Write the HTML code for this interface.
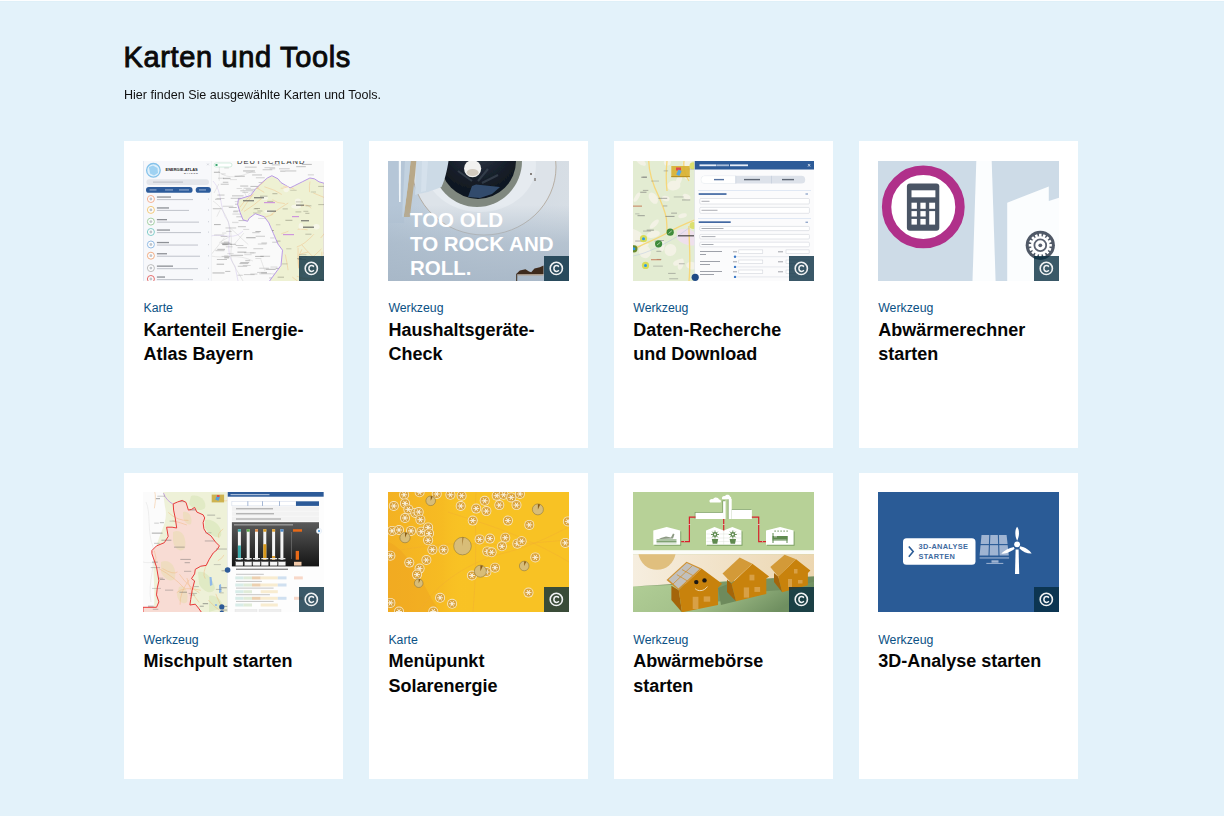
<!DOCTYPE html>
<html><head><meta charset="utf-8">
<style>
html,body{margin:0;padding:0;}
body{width:1224px;height:816px;overflow:hidden;background:#e3f2fa;font-family:"Liberation Sans",sans-serif;position:relative;}
.topline{position:absolute;left:0;top:0;width:1224px;height:1px;background:#fdfeff;border-bottom:1px solid #dff0f8;}
h1{position:absolute;left:123.5px;top:37px;margin:0;font-size:29px;letter-spacing:0.65px;font-weight:normal;-webkit-text-stroke:0.9px #0a0a0a;color:#0a0a0a;line-height:40px;white-space:nowrap;}
.sub{position:absolute;left:124px;top:86.5px;margin:0;font-size:13px;transform:scaleX(0.965);transform-origin:0 0;color:#111;line-height:16px;white-space:nowrap;}
.card{position:absolute;width:219.3px;height:306.6px;background:#fff;}
.img{position:absolute;left:19px;top:20px;width:181px;height:120px;overflow:hidden;background:#ccc;}
.img svg{position:absolute;left:0;top:0;}
.r2 .img{top:19.4px;}
.cc{position:absolute;right:0;bottom:0;width:25px;height:25px;background:rgba(4,42,62,0.78);}

.cc svg{position:absolute;left:0;top:0;}
.lab{position:absolute;left:19.5px;top:159px;font-size:12.3px;color:#0b5184;line-height:16px;white-space:nowrap;}
.tit{position:absolute;left:19.5px;top:176.8px;width:190px;font-size:18px;font-weight:bold;color:#050505;line-height:24.3px;}
</style></head>
<body>
<div class="topline"></div>
<h1>Karten und Tools</h1>
<p class="sub">Hier finden Sie ausgewählte Karten und Tools.</p>

<div class="card" style="left:124px;top:141px">
 <div class="img" id="i1" style="background:#fbfbfb"><svg width="181" height="120" viewBox="0 0 181 120">
<defs><clipPath id="c1bav"><path d="M95.4 38.3 L107.6 34.5 L112.2 28.4 L118.2 22.3 L124.3 17 L128.9 14.7 L135 17.8 L138 21.6 L147.1 26.9 L151.7 24.6 L159.3 20.8 L166.9 17 L171.4 17.8 L176 20.8 L181.3 22.3 L181.3 121 L125.8 121 L138 104.4 L139.5 89.2 L135 83.1 L130.4 72.5 L125.8 61.8 L121.3 55.8 L112.2 52.7 L106.1 57.3 L104.6 60.3 L100 58.8 L97 51.2 L94.7 43.6 Z"/></clipPath></defs>
<rect width="181" height="120" fill="#fafafa"/>
<g fill="none" stroke="#c9b8e8" stroke-width="0.5" opacity="0.8">
<path d="M70 20 C80 30 76 50 85 60 C90 75 80 90 92 105 L95 120"/>
<path d="M68 75 C80 72 90 80 100 70"/>
</g>
<g fill="none" stroke="#cfcfcf" stroke-width="0.45">
<path d="M70 40 C85 50 90 70 88 90 C86 100 95 110 100 120"/>
<path d="M75 10 C85 20 100 15 110 10"/>
<path d="M68 95 C80 98 95 92 110 100"/>
</g>
<rect x="94.9" y="65.1" width="8.0" height="1.1" fill="#8a8a8a" opacity="0.43"/><rect x="137.2" y="9.6" width="5.1" height="1.1" fill="#8a8a8a" opacity="0.50"/><rect x="97.3" y="29.2" width="13.0" height="1.1" fill="#8a8a8a" opacity="0.39"/><rect x="160.2" y="57.3" width="10.1" height="1.1" fill="#8a8a8a" opacity="0.30"/><rect x="138.2" y="102.7" width="9.2" height="1.1" fill="#8a8a8a" opacity="0.47"/><rect x="142.2" y="9.4" width="11.1" height="1.1" fill="#8a8a8a" opacity="0.43"/><rect x="101.8" y="5.6" width="11.9" height="1.1" fill="#8a8a8a" opacity="0.39"/><rect x="147.4" y="103.9" width="10.7" height="1.1" fill="#8a8a8a" opacity="0.53"/><rect x="112.1" y="94.9" width="8.6" height="1.1" fill="#8a8a8a" opacity="0.53"/><rect x="164.8" y="13.3" width="6.1" height="1.1" fill="#8a8a8a" opacity="0.32"/><rect x="174.2" y="52.6" width="10.0" height="1.1" fill="#8a8a8a" opacity="0.34"/><rect x="124.3" y="46.8" width="7.8" height="1.1" fill="#8a8a8a" opacity="0.43"/><rect x="132.7" y="106.9" width="10.5" height="1.1" fill="#8a8a8a" opacity="0.53"/><rect x="162.3" y="117.0" width="10.4" height="1.1" fill="#8a8a8a" opacity="0.30"/><rect x="162.8" y="113.9" width="12.2" height="1.1" fill="#8a8a8a" opacity="0.42"/><rect x="146.8" y="26.5" width="11.7" height="1.1" fill="#8a8a8a" opacity="0.42"/><rect x="100.1" y="9.4" width="11.8" height="1.1" fill="#8a8a8a" opacity="0.55"/><rect x="78.6" y="94.9" width="8.3" height="1.1" fill="#8a8a8a" opacity="0.30"/><rect x="101.0" y="91.2" width="12.0" height="1.1" fill="#8a8a8a" opacity="0.26"/><rect x="136.0" y="7.2" width="10.7" height="1.1" fill="#8a8a8a" opacity="0.35"/><rect x="165.0" y="115.8" width="9.0" height="1.1" fill="#8a8a8a" opacity="0.55"/><rect x="102.8" y="10.9" width="9.8" height="1.1" fill="#8a8a8a" opacity="0.26"/><rect x="90.5" y="49.3" width="9.9" height="1.1" fill="#8a8a8a" opacity="0.30"/><rect x="73.6" y="102.7" width="7.5" height="1.1" fill="#8a8a8a" opacity="0.54"/><rect x="166.7" y="45.8" width="8.7" height="1.1" fill="#8a8a8a" opacity="0.41"/><rect x="139.2" y="71.1" width="9.5" height="1.1" fill="#8a8a8a" opacity="0.44"/><rect x="171.5" y="60.8" width="8.4" height="1.1" fill="#8a8a8a" opacity="0.47"/><rect x="94.9" y="36.9" width="12.8" height="1.1" fill="#8a8a8a" opacity="0.41"/><rect x="128.8" y="3.3" width="8.3" height="1.1" fill="#8a8a8a" opacity="0.42"/><rect x="71.2" y="73.4" width="10.1" height="1.1" fill="#8a8a8a" opacity="0.27"/><rect x="137.4" y="56.1" width="10.4" height="1.1" fill="#8a8a8a" opacity="0.36"/><rect x="146.1" y="87.6" width="5.2" height="1.1" fill="#8a8a8a" opacity="0.27"/><rect x="142.7" y="113.7" width="7.0" height="1.1" fill="#8a8a8a" opacity="0.39"/><rect x="133.6" y="39.1" width="7.9" height="1.1" fill="#8a8a8a" opacity="0.34"/><rect x="109.2" y="71.1" width="7.4" height="1.1" fill="#8a8a8a" opacity="0.36"/><rect x="153.2" y="5.1" width="9.6" height="1.1" fill="#8a8a8a" opacity="0.47"/><rect x="102.8" y="27.8" width="11.4" height="1.1" fill="#8a8a8a" opacity="0.32"/><rect x="89.4" y="52.5" width="10.6" height="1.1" fill="#8a8a8a" opacity="0.28"/><rect x="104.1" y="40.7" width="11.7" height="1.1" fill="#8a8a8a" opacity="0.38"/><rect x="162.3" y="21.6" width="7.7" height="1.1" fill="#8a8a8a" opacity="0.45"/><rect x="165.5" y="54.3" width="6.8" height="1.1" fill="#8a8a8a" opacity="0.29"/><rect x="126.7" y="24.1" width="11.5" height="1.1" fill="#8a8a8a" opacity="0.50"/><rect x="89.0" y="34.3" width="11.5" height="1.1" fill="#8a8a8a" opacity="0.44"/><rect x="156.9" y="42.1" width="6.0" height="1.1" fill="#8a8a8a" opacity="0.34"/><rect x="155.5" y="33.5" width="7.8" height="1.1" fill="#8a8a8a" opacity="0.38"/><rect x="114.8" y="49.5" width="12.4" height="1.1" fill="#8a8a8a" opacity="0.30"/><rect x="69.5" y="111.4" width="12.0" height="1.1" fill="#8a8a8a" opacity="0.55"/><rect x="116.3" y="112.2" width="12.4" height="1.1" fill="#8a8a8a" opacity="0.32"/><rect x="150.3" y="99.1" width="10.3" height="1.1" fill="#8a8a8a" opacity="0.41"/><rect x="100.5" y="41.6" width="6.8" height="1.1" fill="#8a8a8a" opacity="0.27"/><rect x="133.2" y="35.3" width="11.5" height="1.1" fill="#8a8a8a" opacity="0.26"/><rect x="167.5" y="82.5" width="12.4" height="1.1" fill="#8a8a8a" opacity="0.52"/><rect x="167.1" y="68.9" width="5.1" height="1.1" fill="#8a8a8a" opacity="0.47"/><rect x="87.7" y="36.8" width="10.3" height="1.1" fill="#8a8a8a" opacity="0.41"/><rect x="114.1" y="110.9" width="9.9" height="1.1" fill="#8a8a8a" opacity="0.35"/><rect x="96.5" y="102.0" width="8.8" height="1.1" fill="#8a8a8a" opacity="0.48"/><rect x="107.4" y="24.9" width="9.3" height="1.1" fill="#8a8a8a" opacity="0.50"/><rect x="87.7" y="93.8" width="12.4" height="1.1" fill="#8a8a8a" opacity="0.49"/><rect x="158.8" y="2.9" width="10.0" height="1.1" fill="#8a8a8a" opacity="0.51"/><rect x="74.4" y="33.5" width="7.1" height="1.1" fill="#8a8a8a" opacity="0.41"/><rect x="115.1" y="56.9" width="11.2" height="1.1" fill="#8a8a8a" opacity="0.25"/><rect x="75.0" y="16.7" width="6.0" height="1.1" fill="#8a8a8a" opacity="0.27"/><rect x="175.2" y="101.1" width="5.7" height="1.1" fill="#8a8a8a" opacity="0.40"/><rect x="103.4" y="38.5" width="7.8" height="1.1" fill="#8a8a8a" opacity="0.44"/><rect x="132.9" y="43.9" width="6.5" height="1.1" fill="#8a8a8a" opacity="0.35"/><rect x="82.5" y="66.4" width="10.7" height="1.1" fill="#8a8a8a" opacity="0.36"/><rect x="77.7" y="22.7" width="8.0" height="1.1" fill="#8a8a8a" opacity="0.43"/><rect x="154.3" y="46.1" width="11.4" height="1.1" fill="#8a8a8a" opacity="0.44"/><rect x="116.0" y="45.2" width="9.0" height="1.1" fill="#8a8a8a" opacity="0.46"/><rect x="114.8" y="82.5" width="8.7" height="1.1" fill="#8a8a8a" opacity="0.32"/>
<g><rect x="93.6" y="27.0" width="5.3" height="0.9" fill="#707070" opacity="0.24"/><rect x="74.3" y="87.8" width="7.7" height="1.3" fill="#707070" opacity="0.36"/><rect x="126.2" y="60.3" width="7.0" height="1.3" fill="#707070" opacity="0.38"/><rect x="117.3" y="94.7" width="9.8" height="1.3" fill="#707070" opacity="0.26"/><rect x="97.2" y="24.6" width="8.0" height="0.9" fill="#707070" opacity="0.48"/><rect x="101.3" y="93.1" width="7.3" height="1.1" fill="#707070" opacity="0.21"/><rect x="103.0" y="52.9" width="6.5" height="1.3" fill="#707070" opacity="0.22"/><rect x="100.6" y="26.8" width="7.2" height="0.9" fill="#707070" opacity="0.31"/><rect x="82.2" y="109.9" width="5.1" height="1.1" fill="#707070" opacity="0.38"/><rect x="129.0" y="112.5" width="8.6" height="0.9" fill="#707070" opacity="0.23"/><rect x="79.4" y="82.6" width="6.9" height="1.1" fill="#707070" opacity="0.39"/><rect x="77.7" y="75.0" width="6.7" height="0.9" fill="#707070" opacity="0.36"/><rect x="81.2" y="94.5" width="4.4" height="0.9" fill="#707070" opacity="0.33"/><rect x="102.3" y="98.9" width="4.9" height="1.3" fill="#707070" opacity="0.34"/><rect x="72.4" y="88.9" width="9.0" height="1.3" fill="#707070" opacity="0.25"/><rect x="126.4" y="18.3" width="4.8" height="1.1" fill="#707070" opacity="0.25"/><rect x="79.8" y="20.7" width="5.5" height="1.3" fill="#707070" opacity="0.30"/><rect x="99.4" y="30.9" width="5.8" height="1.1" fill="#707070" opacity="0.26"/><rect x="73.4" y="37.1" width="8.1" height="0.9" fill="#707070" opacity="0.30"/><rect x="92.0" y="42.7" width="9.7" height="1.1" fill="#707070" opacity="0.32"/><rect x="91.6" y="14.7" width="10.2" height="1.1" fill="#707070" opacity="0.42"/><rect x="93.3" y="55.1" width="6.2" height="1.3" fill="#707070" opacity="0.27"/><rect x="112.9" y="16.2" width="8.8" height="1.1" fill="#707070" opacity="0.27"/><rect x="118.4" y="81.5" width="5.7" height="1.1" fill="#707070" opacity="0.33"/><rect x="127.5" y="105.5" width="6.9" height="1.1" fill="#707070" opacity="0.22"/><rect x="86.9" y="82.8" width="6.2" height="1.1" fill="#707070" opacity="0.36"/><rect x="125.7" y="33.5" width="10.2" height="1.1" fill="#707070" opacity="0.49"/><rect x="119.4" y="22.3" width="6.7" height="1.3" fill="#707070" opacity="0.38"/><rect x="129.2" y="80.7" width="7.1" height="1.1" fill="#707070" opacity="0.30"/><rect x="81.1" y="4.5" width="6.5" height="1.1" fill="#707070" opacity="0.49"/><rect x="80.8" y="80.5" width="5.2" height="1.3" fill="#707070" opacity="0.28"/><rect x="94.4" y="90.6" width="8.9" height="1.1" fill="#707070" opacity="0.46"/><rect x="90.1" y="50.0" width="4.8" height="1.3" fill="#707070" opacity="0.26"/><rect x="100.8" y="113.2" width="10.8" height="0.9" fill="#707070" opacity="0.35"/><rect x="118.2" y="111.3" width="5.8" height="1.3" fill="#707070" opacity="0.33"/><rect x="103.2" y="76.0" width="9.4" height="1.3" fill="#707070" opacity="0.43"/><rect x="81.2" y="6.4" width="4.7" height="1.1" fill="#707070" opacity="0.22"/><rect x="70.9" y="10.7" width="6.1" height="1.3" fill="#707070" opacity="0.39"/><rect x="112.4" y="70.1" width="5.4" height="0.9" fill="#707070" opacity="0.50"/><rect x="117.4" y="49.8" width="5.2" height="1.1" fill="#707070" opacity="0.30"/><rect x="122.6" y="107.7" width="10.1" height="1.3" fill="#707070" opacity="0.41"/><rect x="94.5" y="113.7" width="5.3" height="1.1" fill="#707070" opacity="0.26"/><rect x="97.3" y="101.1" width="8.9" height="0.9" fill="#707070" opacity="0.45"/><rect x="126.2" y="59.1" width="10.3" height="1.1" fill="#707070" opacity="0.40"/><rect x="128.8" y="65.1" width="11.0" height="1.3" fill="#707070" opacity="0.20"/><rect x="89.1" y="60.8" width="6.4" height="1.3" fill="#707070" opacity="0.20"/><rect x="110.5" y="35.7" width="4.1" height="1.1" fill="#707070" opacity="0.32"/><rect x="79.1" y="71.6" width="4.3" height="0.9" fill="#707070" opacity="0.21"/><rect x="100.2" y="67.9" width="6.0" height="1.1" fill="#707070" opacity="0.22"/><rect x="116.3" y="30.4" width="5.3" height="1.1" fill="#707070" opacity="0.25"/><rect x="85.8" y="46.0" width="7.9" height="0.9" fill="#707070" opacity="0.43"/><rect x="79.6" y="44.7" width="10.7" height="1.3" fill="#707070" opacity="0.22"/><rect x="110.4" y="87.3" width="9.8" height="0.9" fill="#707070" opacity="0.36"/><rect x="71.0" y="63.0" width="6.7" height="1.1" fill="#707070" opacity="0.46"/><rect x="112.7" y="74.7" width="9.3" height="1.3" fill="#707070" opacity="0.25"/><rect x="116.2" y="106.7" width="9.7" height="1.1" fill="#707070" opacity="0.26"/><rect x="80.0" y="16.8" width="7.5" height="1.3" fill="#707070" opacity="0.42"/><rect x="69.8" y="47.3" width="8.8" height="0.9" fill="#707070" opacity="0.43"/><rect x="129.4" y="69.2" width="9.1" height="1.3" fill="#707070" opacity="0.46"/><rect x="73.9" y="98.0" width="10.1" height="0.9" fill="#707070" opacity="0.43"/><rect x="91.8" y="40.0" width="4.3" height="1.1" fill="#707070" opacity="0.21"/><rect x="126.9" y="19.3" width="4.1" height="1.1" fill="#707070" opacity="0.44"/><rect x="87.0" y="18.2" width="7.0" height="0.9" fill="#707070" opacity="0.21"/><rect x="79.0" y="82.6" width="9.9" height="1.3" fill="#707070" opacity="0.30"/><rect x="119.6" y="8.0" width="9.7" height="1.3" fill="#707070" opacity="0.27"/><rect x="78.2" y="81.6" width="9.3" height="1.1" fill="#707070" opacity="0.42"/><rect x="94.6" y="86.3" width="9.4" height="0.9" fill="#707070" opacity="0.36"/><rect x="129.5" y="28.4" width="8.5" height="0.9" fill="#707070" opacity="0.45"/><rect x="74.7" y="4.5" width="10.6" height="0.9" fill="#707070" opacity="0.24"/><rect x="127.2" y="76.4" width="4.4" height="1.1" fill="#707070" opacity="0.25"/><rect x="115.6" y="21.1" width="10.5" height="0.9" fill="#707070" opacity="0.35"/><rect x="126.2" y="116.3" width="4.5" height="1.3" fill="#707070" opacity="0.27"/><rect x="95.5" y="59.0" width="8.3" height="1.1" fill="#707070" opacity="0.35"/><rect x="83.2" y="69.9" width="5.5" height="0.9" fill="#707070" opacity="0.33"/><rect x="81.3" y="96.1" width="4.9" height="1.3" fill="#707070" opacity="0.47"/><rect x="79.5" y="82.9" width="5.2" height="1.3" fill="#707070" opacity="0.40"/><rect x="99.8" y="104.1" width="7.8" height="0.9" fill="#707070" opacity="0.27"/><rect x="82.8" y="85.1" width="6.8" height="1.3" fill="#707070" opacity="0.22"/><rect x="84.3" y="92.2" width="6.3" height="0.9" fill="#707070" opacity="0.23"/><rect x="107.3" y="112.5" width="7.1" height="1.1" fill="#707070" opacity="0.26"/><rect x="72.0" y="37.7" width="5.9" height="1.3" fill="#707070" opacity="0.28"/><rect x="104.2" y="38.0" width="9.1" height="0.9" fill="#707070" opacity="0.25"/><rect x="92.7" y="84.1" width="7.7" height="0.9" fill="#707070" opacity="0.34"/><rect x="126.6" y="7.1" width="5.6" height="1.3" fill="#707070" opacity="0.22"/><rect x="121.5" y="6.1" width="10.6" height="1.1" fill="#707070" opacity="0.27"/><rect x="78.4" y="12.5" width="4.2" height="0.9" fill="#707070" opacity="0.27"/><rect x="106.9" y="91.5" width="4.5" height="0.9" fill="#707070" opacity="0.33"/><rect x="109.1" y="13.3" width="9.9" height="1.3" fill="#707070" opacity="0.31"/><rect x="94.8" y="104.7" width="9.4" height="1.3" fill="#707070" opacity="0.28"/><rect x="112.4" y="97.0" width="5.9" height="0.9" fill="#707070" opacity="0.22"/></g><g fill="none" stroke="#c8c8c8" stroke-width="0.4"><path d="M71.0 32.0 L75.9 22.9"/><path d="M87.7 75.0 L76.2 81.6"/><path d="M100.8 72.2 L91.3 83.3"/><path d="M76.4 2.1 L76.2 19.8"/><path d="M118.2 53.0 L130.0 63.2"/><path d="M100.1 28.2 L107.8 45.1"/><path d="M121.9 109.9 L117.8 98.3"/><path d="M105.1 33.6 L114.8 27.1"/><path d="M105.3 83.6 L87.2 66.9"/><path d="M76.9 49.2 L73.8 55.7"/><path d="M104.8 2.1 L89.6 -5.1"/><path d="M81.4 76.8 L65.7 96.7"/></g><path d="M95.4 38.3 L107.6 34.5 L112.2 28.4 L118.2 22.3 L124.3 17 L128.9 14.7 L135 17.8 L138 21.6 L147.1 26.9 L151.7 24.6 L159.3 20.8 L166.9 17 L171.4 17.8 L176 20.8 L181.3 22.3 L181.3 121 L125.8 121 L138 104.4 L139.5 89.2 L135 83.1 L130.4 72.5 L125.8 61.8 L121.3 55.8 L112.2 52.7 L106.1 57.3 L104.6 60.3 L100 58.8 L97 51.2 L94.7 43.6 Z" fill="#eef1d3" stroke="#b28ee6" stroke-width="0.9"/>
<g clip-path="url(#c1bav)"><ellipse cx="164.3" cy="114.4" rx="5.0" ry="1.5" fill="#f8f8ee" opacity="0.8"/><ellipse cx="124.4" cy="50.5" rx="3.2" ry="1.8" fill="#f8f8ee" opacity="0.8"/><ellipse cx="143.2" cy="27.8" rx="2.9" ry="3.4" fill="#f8f8ee" opacity="0.8"/><ellipse cx="157.9" cy="65.3" rx="2.3" ry="3.4" fill="#f8f8ee" opacity="0.8"/><ellipse cx="154.9" cy="40.2" rx="3.0" ry="2.8" fill="#f8f8ee" opacity="0.8"/><ellipse cx="153.2" cy="45.6" rx="4.9" ry="2.1" fill="#f8f8ee" opacity="0.8"/><ellipse cx="119.8" cy="102.8" rx="2.5" ry="2.9" fill="#f8f8ee" opacity="0.8"/><ellipse cx="115.6" cy="78.6" rx="2.8" ry="2.3" fill="#f8f8ee" opacity="0.8"/><ellipse cx="173.4" cy="65.8" rx="3.3" ry="2.7" fill="#f8f8ee" opacity="0.8"/><ellipse cx="121.9" cy="37.1" rx="3.2" ry="2.0" fill="#f8f8ee" opacity="0.8"/></g><g clip-path="url(#c1bav)" fill="none" stroke="#f2b878" stroke-width="0.45" opacity="0.9"><path d="M109.2 87.4 Q102.4 84.7 100.1 77.2"/><path d="M164.5 68.8 Q155.6 67.6 154.7 68.5"/><path d="M145.3 22.3 Q144.5 13.9 148.0 12.9"/><path d="M180.8 92.6 Q182.7 85.6 192.0 81.3"/><path d="M137.8 27.2 Q140.7 27.9 149.1 23.6"/><path d="M105.7 112.4 Q97.4 114.5 91.6 116.8"/><path d="M111.1 18.9 Q116.6 12.9 117.5 11.6"/><path d="M178.3 108.9 Q179.2 101.6 178.8 90.7"/><path d="M105.5 65.0 Q111.1 64.0 109.8 56.8"/><path d="M130.2 53.3 Q128.4 54.3 118.6 57.0"/><path d="M97.3 24.8 Q95.1 14.0 92.9 3.4"/><path d="M142.3 93.6 Q144.2 102.3 145.1 109.1"/><path d="M110.5 32.9 Q103.3 42.1 98.5 49.9"/><path d="M121.4 25.8 Q132.3 28.7 138.8 33.5"/><path d="M153.8 86.0 Q161.6 83.5 170.9 73.2"/><path d="M177.7 77.0 Q181.8 70.3 187.9 67.7"/><path d="M170.3 32.0 Q181.1 35.9 187.5 40.0"/><path d="M167.0 20.5 Q166.1 23.2 166.5 31.1"/><path d="M101.0 50.5 Q111.7 43.9 118.5 37.6"/><path d="M116.7 115.7 Q104.2 112.0 99.3 112.9"/><path d="M167.1 98.5 Q172.2 93.8 178.5 87.9"/><path d="M168.0 47.3 Q165.1 42.3 157.9 45.1"/><path d="M153.9 115.2 Q162.8 119.1 169.3 117.4"/><path d="M145.3 42.0 Q139.7 45.0 127.6 54.0"/><path d="M103.2 24.9 Q106.8 28.8 116.1 26.9"/><path d="M151.4 28.3 Q145.9 24.7 140.5 25.6"/><path d="M109.3 34.3 Q103.4 36.7 96.8 46.4"/><path d="M156.1 106.8 Q153.6 97.2 158.9 88.3"/><path d="M100.5 95.2 Q102.4 104.5 108.3 110.7"/><path d="M122.0 19.4 Q121.0 21.3 113.6 26.5"/><path d="M138.3 72.7 Q142.7 71.5 145.4 70.2"/><path d="M158.2 116.5 Q155.2 125.0 151.8 132.5"/><path d="M100.5 100.5 Q104.8 103.6 112.0 98.8"/><path d="M104.3 23.0 Q114.9 26.8 121.3 31.4"/><path d="M148.4 17.1 Q144.5 11.0 140.4 6.8"/><path d="M129.5 38.7 Q133.7 42.3 141.9 42.6"/><path d="M165.3 91.0 Q159.7 92.2 155.9 93.7"/><path d="M149.3 116.1 Q155.1 121.4 161.1 123.1"/><path d="M171.6 96.8 Q166.6 93.2 158.9 83.9"/><path d="M155.1 86.7 Q154.5 98.0 155.7 107.4"/></g>
<g clip-path="url(#c1bav)" fill="#5a5a5a" opacity="0.7">
<rect x="100" y="39" width="11" height="1.4"/><rect x="111" y="36" width="10" height="1.4"/><rect x="124" y="49.5" width="9" height="1.4"/>
<rect x="153" y="43.5" width="8" height="1.4"/><rect x="158" y="59" width="8" height="1.4"/><rect x="160" y="65.5" width="11" height="1.5"/>
<rect x="149" y="55" width="7" height="1.2" fill="#c070e0"/><rect x="121" y="41" width="11" height="1.2" fill="#c070e0"/><rect x="140" y="73" width="11" height="1.2" fill="#c070e0"/>
</g>
<g clip-path="url(#c1bav)"><rect x="164.8" y="107.2" width="4.9" height="1" fill="#6a6a5a" opacity="0.28"/><rect x="160.4" y="49.8" width="4.9" height="1" fill="#6a6a5a" opacity="0.35"/><rect x="124.2" y="39.9" width="6.1" height="1" fill="#6a6a5a" opacity="0.41"/><rect x="106.1" y="114.0" width="5.5" height="1" fill="#6a6a5a" opacity="0.46"/><rect x="156.7" y="95.0" width="7.6" height="1" fill="#6a6a5a" opacity="0.26"/><rect x="147.2" y="28.8" width="6.4" height="1" fill="#6a6a5a" opacity="0.28"/><rect x="122.7" y="69.0" width="8.2" height="1" fill="#6a6a5a" opacity="0.47"/><rect x="139.1" y="102.4" width="5.3" height="1" fill="#6a6a5a" opacity="0.31"/><rect x="114.4" y="49.5" width="5.0" height="1" fill="#6a6a5a" opacity="0.38"/><rect x="162.6" y="44.3" width="5.8" height="1" fill="#6a6a5a" opacity="0.38"/><rect x="117.7" y="64.2" width="4.7" height="1" fill="#6a6a5a" opacity="0.25"/><rect x="156.5" y="93.2" width="6.9" height="1" fill="#6a6a5a" opacity="0.27"/><rect x="132.9" y="63.3" width="4.5" height="1" fill="#6a6a5a" opacity="0.25"/><rect x="167.8" y="30.5" width="5.2" height="1" fill="#6a6a5a" opacity="0.30"/><rect x="111.4" y="47.0" width="5.6" height="1" fill="#6a6a5a" opacity="0.46"/><rect x="152.8" y="40.4" width="7.1" height="1" fill="#6a6a5a" opacity="0.33"/><rect x="175.3" y="43.1" width="6.0" height="1" fill="#6a6a5a" opacity="0.38"/><rect x="134.6" y="115.7" width="6.4" height="1" fill="#6a6a5a" opacity="0.40"/><rect x="117.0" y="34.7" width="7.5" height="1" fill="#6a6a5a" opacity="0.42"/><rect x="143.2" y="87.3" width="5.2" height="1" fill="#6a6a5a" opacity="0.30"/><rect x="162.3" y="72.7" width="6.1" height="1" fill="#6a6a5a" opacity="0.37"/><rect x="112.8" y="55.7" width="4.9" height="1" fill="#6a6a5a" opacity="0.38"/><rect x="162.3" y="51.8" width="4.1" height="1" fill="#6a6a5a" opacity="0.40"/><rect x="111.9" y="64.3" width="4.3" height="1" fill="#6a6a5a" opacity="0.33"/><rect x="152.5" y="50.4" width="5.8" height="1" fill="#6a6a5a" opacity="0.39"/><rect x="154.1" y="97.0" width="4.5" height="1" fill="#6a6a5a" opacity="0.39"/><rect x="102.6" y="110.1" width="6.1" height="1" fill="#6a6a5a" opacity="0.41"/><rect x="103.1" y="83.0" width="6.4" height="1" fill="#6a6a5a" opacity="0.36"/><rect x="142.4" y="58.8" width="7.0" height="1" fill="#6a6a5a" opacity="0.46"/><rect x="129.4" y="32.2" width="5.0" height="1" fill="#6a6a5a" opacity="0.44"/><rect x="110.5" y="47.4" width="4.5" height="1" fill="#6a6a5a" opacity="0.25"/><rect x="130.5" y="79.6" width="7.0" height="1" fill="#6a6a5a" opacity="0.40"/><rect x="176.2" y="118.4" width="5.4" height="1" fill="#6a6a5a" opacity="0.47"/><rect x="110.5" y="108.0" width="8.2" height="1" fill="#6a6a5a" opacity="0.32"/><rect x="154.7" y="98.0" width="8.3" height="1" fill="#6a6a5a" opacity="0.26"/><rect x="139.6" y="47.4" width="5.2" height="1" fill="#6a6a5a" opacity="0.38"/><rect x="110.0" y="51.4" width="7.7" height="1" fill="#6a6a5a" opacity="0.27"/><rect x="175.2" y="24.9" width="6.5" height="1" fill="#6a6a5a" opacity="0.37"/><rect x="105.2" y="107.3" width="5.2" height="1" fill="#6a6a5a" opacity="0.38"/><rect x="103.0" y="66.0" width="8.0" height="1" fill="#6a6a5a" opacity="0.48"/></g><text x="93.9" y="2.8" font-family="Liberation Sans" font-size="7.5" fill="#333" textLength="67.6" lengthAdjust="spacing">DEUTSCHLAND</text>
<rect x="0" y="0" width="68.3" height="120" fill="#f7f8fb"/>
<rect x="0" y="0" width="0.8" height="120" fill="#dfe6f2"/>
<rect x="68.3" y="0" width="0.5" height="120" fill="#e8eaef"/>
<circle cx="10.4" cy="9.3" r="6.8" fill="#dff0fb" stroke="#84c2ea" stroke-width="1.3"/>
<path d="M6 6 L10 4.5 L14.5 7 L15 12 L11 14.5 L7 12.5 Z" fill="#9fd2f2"/>
<text x="22.5" y="10.1" font-family="Liberation Sans" font-weight="bold" font-size="4.4" fill="#222" textLength="32.2" lengthAdjust="spacingAndGlyphs">ENERGIE-ATLAS</text>
<text x="41" y="13.1" font-family="Liberation Sans" font-weight="bold" font-size="2.4" fill="#555" textLength="13.7" lengthAdjust="spacing">BAYERN</text>
<path d="M64 2.5 L65.8 4.3 M65.8 2.5 L64 4.3" stroke="#b8bcc4" stroke-width="0.5"/>
<rect x="3.4" y="18.2" width="62.6" height="5.8" rx="2.9" fill="#e4e6eb"/>
<rect x="10" y="20.6" width="30" height="1" fill="#b8bcc4"/>
<rect x="3" y="26" width="46.6" height="5.8" rx="2.9" fill="#2c5b9b"/>
<rect x="52.7" y="26" width="15.2" height="5.8" rx="2.9" fill="#2c5b9b"/>
<g fill="#c8d4e8" opacity="0.8"><rect x="6.5" y="28.5" width="7" height="0.9"/><rect x="22" y="28.5" width="8" height="0.9"/><rect x="36" y="28.5" width="10" height="0.9"/><rect x="56" y="28.5" width="7" height="0.9"/></g>
<circle cx="7.9" cy="38" r="3.5" fill="#fff" stroke="#f2a27e" stroke-width="1" opacity="0.85"/><circle cx="7.9" cy="38" r="1.4" fill="#9aa0a8" opacity="0.6"/><rect x="13.9" y="35.4" width="14.1" height="1.3" fill="#6a6d74" opacity="0.75"/><rect x="13.9" y="38" width="36.1" height="1.1" fill="#b8bcc4" opacity="0.8"/><rect x="65" y="37.5" width="0.8" height="1.2" fill="#c8ccd4"/><circle cx="7.9" cy="48.9" r="3.5" fill="#fff" stroke="#f0c062" stroke-width="1" opacity="0.85"/><circle cx="7.9" cy="48.9" r="1.4" fill="#9aa0a8" opacity="0.6"/><rect x="13.9" y="46.3" width="12.1" height="1.3" fill="#6a6d74" opacity="0.75"/><rect x="13.9" y="48.9" width="32.1" height="1.1" fill="#b8bcc4" opacity="0.8"/><rect x="65" y="48.4" width="0.8" height="1.2" fill="#c8ccd4"/><circle cx="7.9" cy="60.6" r="3.5" fill="#fff" stroke="#94c894" stroke-width="1" opacity="0.85"/><circle cx="7.9" cy="60.6" r="1.4" fill="#9aa0a8" opacity="0.6"/><rect x="13.9" y="58.0" width="10.1" height="1.3" fill="#6a6d74" opacity="0.75"/><rect x="13.9" y="60.6" width="42.1" height="1.1" fill="#b8bcc4" opacity="0.8"/><rect x="65" y="60.1" width="0.8" height="1.2" fill="#c8ccd4"/><circle cx="7.9" cy="71" r="3.5" fill="#fff" stroke="#6cc4c0" stroke-width="1" opacity="0.85"/><circle cx="7.9" cy="71" r="1.4" fill="#9aa0a8" opacity="0.6"/><rect x="13.9" y="68.4" width="13.1" height="1.3" fill="#6a6d74" opacity="0.75"/><rect x="13.9" y="71" width="44.1" height="1.1" fill="#b8bcc4" opacity="0.8"/><rect x="65" y="70.5" width="0.8" height="1.2" fill="#c8ccd4"/><circle cx="7.9" cy="83.5" r="3.5" fill="#fff" stroke="#7fb0e0" stroke-width="1" opacity="0.85"/><circle cx="7.9" cy="83.5" r="1.4" fill="#9aa0a8" opacity="0.6"/><rect x="13.9" y="80.9" width="12.1" height="1.3" fill="#6a6d74" opacity="0.75"/><rect x="13.9" y="83.5" width="41.1" height="1.1" fill="#b8bcc4" opacity="0.8"/><rect x="65" y="83.0" width="0.8" height="1.2" fill="#c8ccd4"/><circle cx="7.9" cy="94.7" r="3.5" fill="#fff" stroke="#f0a070" stroke-width="1" opacity="0.85"/><circle cx="7.9" cy="94.7" r="1.4" fill="#9aa0a8" opacity="0.6"/><rect x="13.9" y="92.10000000000001" width="10.1" height="1.3" fill="#6a6d74" opacity="0.75"/><rect x="13.9" y="94.7" width="43.1" height="1.1" fill="#b8bcc4" opacity="0.8"/><rect x="65" y="94.2" width="0.8" height="1.2" fill="#c8ccd4"/><circle cx="7.9" cy="107.1" r="3.5" fill="#fff" stroke="#b0b0b0" stroke-width="1" opacity="0.85"/><circle cx="7.9" cy="107.1" r="1.4" fill="#9aa0a8" opacity="0.6"/><rect x="13.9" y="104.5" width="16.1" height="1.3" fill="#6a6d74" opacity="0.75"/><rect x="13.9" y="107.1" width="41.1" height="1.1" fill="#b8bcc4" opacity="0.8"/><rect x="65" y="106.6" width="0.8" height="1.2" fill="#c8ccd4"/><circle cx="7.9" cy="118" r="3.5" fill="#fff" stroke="#e05050" stroke-width="1" opacity="0.85"/><circle cx="7.9" cy="118" r="1.4" fill="#9aa0a8" opacity="0.6"/><rect x="13.9" y="115.4" width="8.1" height="1.3" fill="#6a6d74" opacity="0.75"/><rect x="13.9" y="118" width="36.1" height="1.1" fill="#b8bcc4" opacity="0.8"/><rect x="65" y="117.5" width="0.8" height="1.2" fill="#c8ccd4"/>
<rect x="71" y="2" width="18" height="4" rx="2" fill="#fff" stroke="#a8dcc0" stroke-width="0.5"/>
<rect x="72.5" y="3" width="2" height="2" fill="#3aa870"/>
</svg><div class="cc"><svg width="25" height="25" viewBox="0 0 25 25"><circle cx="12.3" cy="12.4" r="6.1" fill="none" stroke="#f0f2f3" stroke-width="1.6"/><path d="M14.7 10.6 C14.2 9.8 13.4 9.5 12.6 9.5 C10.9 9.5 9.9 10.8 9.9 12.5 C9.9 14.2 10.9 15.4 12.6 15.4 C13.5 15.4 14.3 15 14.8 14.2" fill="none" stroke="#f0f2f3" stroke-width="1.5"/><path d="M14.6 9.6 L14.6 11.2" stroke="#f0f2f3" stroke-width="0.9"/></svg></div></div>
 <div class="lab">Karte</div>
 <div class="tit">Kartenteil Energie-<br>Atlas Bayern</div>
</div>
<div class="card" style="left:368.9px;top:141px">
 <div class="img" id="i2" style="background:#c9d3dd"><svg width="181" height="120" viewBox="0 0 181 120">
<defs>
<filter id="b2" x="-10%" y="-10%" width="120%" height="120%"><feGaussianBlur stdDeviation="0.55"/></filter>
<linearGradient id="g2bg" x1="0" y1="0" x2="1" y2="0"><stop offset="0" stop-color="#b8c9d9"/><stop offset="0.5" stop-color="#cdd7e1"/><stop offset="1" stop-color="#d7dee5"/></linearGradient>
<radialGradient id="g2drum" cx="0.5" cy="0.3" r="0.6"><stop offset="0" stop-color="#3a4350"/><stop offset="0.6" stop-color="#1b2330"/><stop offset="1" stop-color="#101820"/></radialGradient>
<linearGradient id="g2bot" x1="0" y1="0" x2="0" y2="1"><stop offset="0" stop-color="#a8b8c8" stop-opacity="0"/><stop offset="0.5" stop-color="#a8b8c8" stop-opacity="0.7"/><stop offset="1" stop-color="#a6b6c6" stop-opacity="0.9"/></linearGradient>
</defs>
<rect width="181" height="120" fill="url(#g2bg)"/>
<g filter="url(#b2)">
<ellipse cx="96" cy="6" rx="72" ry="68" fill="#dde3e9" stroke="#a89a88" stroke-width="0.7"/>
<ellipse cx="92" cy="4" rx="56" ry="47" fill="#e6ebf0"/>
<ellipse cx="89" cy="0" rx="45" ry="46" fill="#80887f"/>
<ellipse cx="90" cy="0" rx="38" ry="38" fill="url(#g2drum)"/>
<path d="M84 25 L88 23.5 L112 26 L104 33 L92 37 L80 36 Z" fill="#36557a" opacity="0.85"/><path d="M70 10 L84 20 M100 8 L90 20 M110 14 L94 22" stroke="#4a5664" stroke-width="2" opacity="0.5"/>
<circle cx="84.6" cy="7.6" r="8.6" fill="#f2f2f0"/>
<ellipse cx="84.6" cy="11.5" rx="6" ry="3.5" fill="#b8ab98" opacity="0.55"/>
<path d="M0 0 L17 0 L16 62 L0 62 Z" fill="#b5c6d7"/>
<path d="M10.8 0 L13 0 L12.6 41 L11 41 Z" fill="#f2f7fa"/>
<path d="M28 0 L60.5 0 C59 10 56.5 20 53.5 26 C48 28 44 29.5 40 31 C35 32 30 33 27 34 Z" fill="#ccdae6"/>
<path d="M34 0 L40 0 L38 30 L33 31 Z" fill="#d8e4ee" opacity="0.7"/>
<path d="M22.6 0 L28.3 0 C27 18 24 38 21.8 56 L15.7 56 C18 38 21 18 22.6 0 Z" fill="#b8a888"/>
<path d="M17 0 L22.6 0 C21 18 18 38 15.7 56 L14 56 Z" fill="#c2d2e0"/>
<circle cx="143" cy="13" r="0.9" fill="#5a5048"/>
<path d="M146.5 17 L147.5 17 L147.5 20 L146.5 20 Z" fill="#5a5048"/>

</g>
<rect y="44" width="181" height="76" fill="url(#g2bot)"/>
<g filter="url(#b2)"><path d="M128.5 112.8 L131.8 109.5 L137.5 108.3 L141 110.5 L143.2 111.2 L146.5 107.5 L151.8 106.3 L155.5 104.6 L155.5 113 L129.5 113.3 Z" fill="#3e2a1c"/>
<path d="M129.5 113.3 L155.5 113 L155.5 114.5 L130 114.5 Z" fill="#b08050" opacity="0.5"/>
<path d="M128.2 112.8 L129.3 112.8 L129.2 120 L128.2 120 Z" fill="#3e2e22"/></g>
<g font-family="Liberation Sans" font-weight="bold" font-size="20.5" fill="#fff">
<text x="22" y="65.8">TOO OLD</text>
<text x="22" y="89.6">TO ROCK AND</text>
<text x="22" y="113.5">ROLL.</text>
</g>
</svg><div class="cc"><svg width="25" height="25" viewBox="0 0 25 25"><circle cx="12.3" cy="12.4" r="6.1" fill="none" stroke="#f0f2f3" stroke-width="1.6"/><path d="M14.7 10.6 C14.2 9.8 13.4 9.5 12.6 9.5 C10.9 9.5 9.9 10.8 9.9 12.5 C9.9 14.2 10.9 15.4 12.6 15.4 C13.5 15.4 14.3 15 14.8 14.2" fill="none" stroke="#f0f2f3" stroke-width="1.5"/><path d="M14.6 9.6 L14.6 11.2" stroke="#f0f2f3" stroke-width="0.9"/></svg></div></div>
 <div class="lab">Werkzeug</div>
 <div class="tit">Haushaltsgeräte-<br>Check</div>
</div>
<div class="card" style="left:613.8px;top:141px">
 <div class="img" id="i3" style="background:#f4f2ea"><svg width="181" height="120" viewBox="0 0 181 120">
<rect width="181" height="120" fill="#e3ecd2"/>
<g fill="#f5f3e8" opacity="0.9"><ellipse cx="37.4" cy="89.0" rx="6.1" ry="5.8" transform="rotate(133 37.4 89.0)"/><ellipse cx="55.3" cy="3.5" rx="4.6" ry="5.8" transform="rotate(117 55.3 3.5)"/><ellipse cx="54.1" cy="13.6" rx="4.6" ry="3.0" transform="rotate(98 54.1 13.6)"/><ellipse cx="34.4" cy="1.6" rx="3.5" ry="3.1" transform="rotate(165 34.4 1.6)"/><ellipse cx="45.9" cy="19.2" rx="6.1" ry="2.6" transform="rotate(111 45.9 19.2)"/><ellipse cx="7.6" cy="0.2" rx="6.4" ry="2.8" transform="rotate(39 7.6 0.2)"/><ellipse cx="58.9" cy="104.7" rx="3.8" ry="5.8" transform="rotate(97 58.9 104.7)"/><ellipse cx="40.7" cy="24.6" rx="6.7" ry="4.8" transform="rotate(174 40.7 24.6)"/><ellipse cx="53.6" cy="35.9" rx="4.1" ry="2.7" transform="rotate(26 53.6 35.9)"/><ellipse cx="3.9" cy="36.2" rx="5.2" ry="2.0" transform="rotate(122 3.9 36.2)"/><ellipse cx="20.3" cy="37.2" rx="6.2" ry="3.9" transform="rotate(57 20.3 37.2)"/><ellipse cx="28.9" cy="84.6" rx="2.8" ry="5.9" transform="rotate(4 28.9 84.6)"/><ellipse cx="45.0" cy="101.4" rx="2.6" ry="5.2" transform="rotate(66 45.0 101.4)"/><ellipse cx="34.7" cy="1.1" rx="2.7" ry="2.7" transform="rotate(172 34.7 1.1)"/><ellipse cx="11.8" cy="90.7" rx="6.7" ry="5.8" transform="rotate(62 11.8 90.7)"/><ellipse cx="21.3" cy="63.0" rx="6.0" ry="2.4" transform="rotate(135 21.3 63.0)"/><ellipse cx="47.8" cy="103.2" rx="2.7" ry="5.8" transform="rotate(16 47.8 103.2)"/><ellipse cx="20.4" cy="73.3" rx="6.6" ry="3.4" transform="rotate(166 20.4 73.3)"/><ellipse cx="32.7" cy="37.5" rx="3.9" ry="2.7" transform="rotate(14 32.7 37.5)"/><ellipse cx="8.9" cy="82.7" rx="7.0" ry="2.6" transform="rotate(9 8.9 82.7)"/><ellipse cx="59.2" cy="64.0" rx="4.3" ry="2.9" transform="rotate(107 59.2 64.0)"/><ellipse cx="49.6" cy="54.7" rx="4.4" ry="2.2" transform="rotate(165 49.6 54.7)"/></g>
<path d="M44 70 C50 66 58 68 62 72 L62 84 C56 86 48 82 44 78 Z" fill="#eee0ec"/>
<path d="M0 68 C8 70 14 76 10 84 L0 84 Z" fill="#f5f3e8" opacity="0.8"/>
<g fill="none" stroke="#f6d77a" stroke-width="1.3">
<path d="M15.7 0 C16 12 20 24 26 36 C30 46 33 52 33.5 58.8 C34 64 34 68 34 72"/>
<path d="M0.3 88.2 C12 82 24 78 34 72 C44 66 54 62 62 58.8"/>
<path d="M55.9 65 C56 80 58 100 56 120"/>
<path d="M51 0 C50 8 52 14 56 20"/>
<path d="M34 0 C33 10 33 20 34 30"/>
</g>
<g fill="none" stroke="#b8c8e0" stroke-width="0.5"><path d="M0 95 C15 92 30 84 45 75 C52 70 56 66 62 65"/></g>
<rect x="18.1" y="19.5" width="7.9" height="1.1" fill="#707070" opacity="0.32"/><rect x="30.0" y="44.4" width="4.3" height="1.1" fill="#707070" opacity="0.45"/><rect x="2.1" y="52.3" width="4.4" height="1.1" fill="#707070" opacity="0.33"/><rect x="23.8" y="97.9" width="4.7" height="1.1" fill="#707070" opacity="0.37"/><rect x="35.1" y="111.9" width="7.5" height="1.1" fill="#707070" opacity="0.42"/><rect x="54.7" y="7.4" width="9.2" height="1.1" fill="#707070" opacity="0.39"/><rect x="8.1" y="15.7" width="5.9" height="1.1" fill="#707070" opacity="0.54"/><rect x="10.1" y="69.5" width="7.8" height="1.1" fill="#707070" opacity="0.41"/><rect x="30.7" y="9.3" width="4.4" height="1.1" fill="#707070" opacity="0.36"/><rect x="38.1" y="51.6" width="5.9" height="1.1" fill="#707070" opacity="0.48"/><rect x="25.4" y="36.8" width="8.8" height="1.1" fill="#707070" opacity="0.51"/><rect x="13.7" y="68.6" width="7.2" height="1.1" fill="#707070" opacity="0.56"/><rect x="40.8" y="35.4" width="9.9" height="1.1" fill="#707070" opacity="0.34"/><rect x="23.4" y="89.8" width="4.9" height="1.1" fill="#707070" opacity="0.45"/><rect x="2.2" y="79.5" width="8.6" height="1.1" fill="#707070" opacity="0.47"/><rect x="49.0" y="38.4" width="8.2" height="1.1" fill="#707070" opacity="0.48"/><rect x="32.5" y="54.9" width="9.0" height="1.1" fill="#707070" opacity="0.58"/><rect x="26.5" y="79.0" width="4.4" height="1.1" fill="#707070" opacity="0.51"/><rect x="36.2" y="117.2" width="8.9" height="1.1" fill="#707070" opacity="0.39"/><rect x="21.6" y="79.6" width="4.1" height="1.1" fill="#707070" opacity="0.44"/><rect x="9.4" y="15.6" width="4.4" height="1.1" fill="#707070" opacity="0.53"/><rect x="7.2" y="30.7" width="6.3" height="1.1" fill="#707070" opacity="0.56"/><rect x="4.5" y="54.1" width="7.3" height="1.1" fill="#707070" opacity="0.57"/><rect x="45.9" y="102.2" width="5.7" height="1.1" fill="#707070" opacity="0.42"/><rect x="20.1" y="104.6" width="9.7" height="1.1" fill="#707070" opacity="0.35"/><rect x="9.9" y="28.9" width="5.4" height="1.1" fill="#707070" opacity="0.45"/>
<rect x="0" y="44.5" width="9" height="1.3" fill="#c0603a" opacity="0.6"/>
<rect x="18" y="98" width="10" height="1.3" fill="#c0603a" opacity="0.6"/>
<rect x="45" y="74" width="16" height="1.5" fill="#333" opacity="0.7"/>
<g>
<rect x="38.3" y="5" width="18.5" height="11" fill="#d8b030" opacity="0.9"/>
<rect x="43" y="6.5" width="5" height="3" fill="#e04848"/><rect x="44.5" y="9" width="3.5" height="5.5" fill="#58a8e0" transform="rotate(25 46 11)"/>
<rect x="38.3" y="15" width="18.5" height="1.2" fill="#b89020"/>
</g>
<circle cx="60" cy="4.7" r="3.5" fill="#d8de60" opacity="0.9"/>
<circle cx="60" cy="64.5" r="3.5" fill="#d8de60" opacity="0.9"/>
<circle cx="37.2" cy="71.2" r="3.6" fill="#3e8a3a"/><path d="M35.5 72.5 L38.8 69.8" stroke="#d8ecd0" stroke-width="0.7"/>
<circle cx="25.6" cy="82.8" r="3.6" fill="#3e8a3a"/><path d="M24 84 L27.3 81.3" stroke="#d8ecd0" stroke-width="0.7"/>
<circle cx="10.5" cy="77.7" r="3.6" fill="#d8dc58"/><circle cx="10.5" cy="77.7" r="1.5" fill="#2a9ae8"/>
<circle cx="12.5" cy="104.4" r="3.6" fill="#d8dc58"/><circle cx="12.5" cy="104.4" r="1.5" fill="#2a9ae8"/>
<circle cx="0.9" cy="87.8" r="3.6" fill="#6a8a2a"/><circle cx="0.9" cy="87.8" r="1.5" fill="#2a9ae8"/>
<rect x="61.8" y="0" width="119.2" height="120" fill="#fbfbfc"/>
<rect x="61.3" y="0" width="0.6" height="120" fill="#dfe3ea"/>
<path d="M61.8 0 L181 0 L181 8.6 L61.8 8.6 Z" fill="#2d5b98"/>
<rect x="66.5" y="3.4" width="17" height="1.8" fill="#e8eef8"/><rect x="84" y="3.4" width="12" height="1.8" fill="#a8bcd8"/><rect x="97" y="3.4" width="18" height="1.8" fill="#e8eef8"/>
<path d="M175 3 L177.2 5.6 M177.2 3 L175 5.6" stroke="#fff" stroke-width="0.7"/>
<rect x="68" y="14.8" width="104.2" height="7.7" rx="3.85" fill="#dde2ea"/>
<path d="M71.85 14.8 L102.8 14.8 L102.8 22.5 L71.85 22.5 A3.85 3.85 0 0 1 71.85 14.8 Z" fill="#fff" stroke="#e2e6ec" stroke-width="0.3"/>
<rect x="102.6" y="14.8" width="0.5" height="7.7" fill="#b8c4d4"/><rect x="138.1" y="14.8" width="0.5" height="7.7" fill="#b8c4d4"/>
<rect x="81" y="17.9" width="10" height="1.4" fill="#3a5a90" opacity="0.85"/><rect x="111" y="17.9" width="16" height="1.4" fill="#404858" opacity="0.8"/><rect x="149" y="17.9" width="12" height="1.4" fill="#404858" opacity="0.8"/>
<rect x="65" y="29.2" width="113" height="0.5" fill="#c4d4ec"/>
<rect x="65" y="57" width="113" height="0.5" fill="#c4d4ec"/>
<rect x="65.7" y="32.2" width="27.8" height="1.7" fill="#2e5898" opacity="0.9"/><rect x="172.5" y="32.5" width="2.5" height="1" fill="#6a88b8"/>
<rect x="65.7" y="60.3" width="32" height="1.7" fill="#2e5898" opacity="0.9"/><rect x="172.5" y="60.7" width="2.5" height="1" fill="#6a88b8"/>
<g fill="#fff" stroke="#c8ccd4" stroke-width="0.5">
<rect x="66.8" y="37.5" width="109.6" height="5.5" rx="1"/>
<rect x="66.8" y="46.4" width="109.6" height="5.9" rx="1"/>
<rect x="66.8" y="65.4" width="109.6" height="4.2" rx="1"/>
<rect x="66.8" y="73.4" width="109.6" height="4.6" rx="1"/>
<rect x="66.8" y="81.2" width="109.6" height="4.6" rx="1"/>
<rect x="105.8" y="88.9" width="24" height="3.8"/><rect x="153" y="88.9" width="23.1" height="3.8"/>
<rect x="105.8" y="99" width="24" height="3.6"/><rect x="153" y="99" width="23.1" height="3.6"/>
<rect x="105.8" y="109" width="24" height="3.6"/><rect x="153" y="109" width="23.1" height="3.6"/>
</g>
<g fill="#80848e" opacity="0.75">
<rect x="68.5" y="39.8" width="8" height="0.9"/><rect x="68.5" y="48.8" width="16" height="0.9"/>
<rect x="68.5" y="67" width="22" height="0.9"/><rect x="68.5" y="75.2" width="14" height="0.9"/><rect x="68.5" y="83" width="12" height="0.9"/>
<rect x="67" y="90" width="22" height="1"/><rect x="67" y="93" width="6" height="1"/>
<rect x="67" y="100" width="20" height="1"/><rect x="67" y="103" width="10" height="1"/>
<rect x="67" y="110" width="22" height="1"/><rect x="67" y="113" width="14" height="1"/>
<rect x="100" y="90.3" width="4" height="1"/><rect x="145" y="90.3" width="5" height="1"/>
<rect x="100" y="100.3" width="4" height="1"/><rect x="145" y="100.3" width="5" height="1"/>
<rect x="100" y="110.3" width="4" height="1"/><rect x="145" y="110.3" width="5" height="1"/>
</g>
<g fill="#d0d4dc"><rect x="102" y="95.6" width="74" height="0.5"/><rect x="102" y="105.7" width="74" height="0.5"/><rect x="102" y="115.7" width="74" height="0.5"/></g>
<g fill="#3a78c8"><circle cx="102" cy="95.8" r="1.2"/><circle cx="102" cy="105.9" r="1.2"/><circle cx="102" cy="115.9" r="1.2"/></g>
<circle cx="62.2" cy="116.3" r="3.6" fill="#1f4a86"/>
</svg><div class="cc"><svg width="25" height="25" viewBox="0 0 25 25"><circle cx="12.3" cy="12.4" r="6.1" fill="none" stroke="#f0f2f3" stroke-width="1.6"/><path d="M14.7 10.6 C14.2 9.8 13.4 9.5 12.6 9.5 C10.9 9.5 9.9 10.8 9.9 12.5 C9.9 14.2 10.9 15.4 12.6 15.4 C13.5 15.4 14.3 15 14.8 14.2" fill="none" stroke="#f0f2f3" stroke-width="1.5"/><path d="M14.6 9.6 L14.6 11.2" stroke="#f0f2f3" stroke-width="0.9"/></svg></div></div>
 <div class="lab">Werkzeug</div>
 <div class="tit">Daten-Recherche<br>und Download</div>
</div>
<div class="card" style="left:858.7px;top:141px">
 <div class="img" id="i4" style="background:#cddbe7"><svg width="181" height="120" viewBox="0 0 181 120">
<path d="M98.3 0 L113.7 0 L117.6 120 L94.5 120 Z" fill="#fbfdfe"/>
<path d="M129.2 41.7 L170.8 25.4 L170.8 40.1 L181 36.7 L181 120 L129.2 120 Z" fill="#fbfdfe"/>
<circle cx="45.3" cy="45.9" r="36.7" fill="#fff" stroke="#b0308a" stroke-width="9.4"/>
<rect x="28.9" y="22.4" width="32.4" height="47.3" rx="3" fill="#4a5565"/>
<rect x="33.5" y="29.3" width="23.9" height="7" fill="#fff"/>
<rect x="33.5" y="41.7" width="5.4" height="6.1" fill="#fff"/>
<rect x="42.4" y="41.7" width="5.3" height="6.1" fill="#fff"/>
<rect x="51.2" y="41.7" width="5.9" height="6.1" fill="#fff"/>
<rect x="33.5" y="50.1" width="5.4" height="5.4" fill="#fff"/>
<rect x="42.4" y="50.1" width="5.3" height="5.4" fill="#fff"/>
<rect x="51.2" y="50.1" width="5.9" height="13.5" fill="#fff"/>
<rect x="33.5" y="57.9" width="5.4" height="5.7" fill="#fff"/>
<rect x="42.4" y="57.9" width="5.3" height="5.7" fill="#fff"/>
<circle cx="162.3" cy="84.3" r="14.6" fill="#4f5866"/>
<circle cx="162.3" cy="84.3" r="9.4" fill="#fff"/>
<path d="M171.21 83.02 L173.83 83.03 L173.83 85.57 L171.21 85.58ZM171.02 86.52 L173.44 87.54 L172.46 89.89 L170.04 88.89ZM169.51 89.69 L171.35 91.55 L169.55 93.35 L167.69 91.51ZM166.89 92.04 L167.89 94.46 L165.54 95.44 L164.52 93.02ZM163.58 93.21 L163.57 95.83 L161.03 95.83 L161.02 93.21ZM160.08 93.02 L159.06 95.44 L156.71 94.46 L157.71 92.04ZM156.91 91.51 L155.05 93.35 L153.25 91.55 L155.09 89.69ZM154.56 88.89 L152.14 89.89 L151.16 87.54 L153.58 86.52ZM153.39 85.58 L150.77 85.57 L150.77 83.03 L153.39 83.02ZM153.58 82.08 L151.16 81.06 L152.14 78.71 L154.56 79.71ZM155.09 78.91 L153.25 77.05 L155.05 75.25 L156.91 77.09ZM157.71 76.56 L156.71 74.14 L159.06 73.16 L160.08 75.58ZM161.02 75.39 L161.03 72.77 L163.57 72.77 L163.58 75.39ZM164.52 75.58 L165.54 73.16 L167.89 74.14 L166.89 76.56ZM167.69 77.09 L169.55 75.25 L171.35 77.05 L169.51 78.91ZM170.04 79.71 L172.46 78.71 L173.44 81.06 L171.02 82.08Z" fill="#fff"/>
<circle cx="162.3" cy="84.3" r="5.9" fill="none" stroke="#5a6170" stroke-width="1.8"/>
<circle cx="162.3" cy="84.3" r="1.9" fill="#5a6170"/>
</svg><div class="cc"><svg width="25" height="25" viewBox="0 0 25 25"><circle cx="12.3" cy="12.4" r="6.1" fill="none" stroke="#f0f2f3" stroke-width="1.6"/><path d="M14.7 10.6 C14.2 9.8 13.4 9.5 12.6 9.5 C10.9 9.5 9.9 10.8 9.9 12.5 C9.9 14.2 10.9 15.4 12.6 15.4 C13.5 15.4 14.3 15 14.8 14.2" fill="none" stroke="#f0f2f3" stroke-width="1.5"/><path d="M14.6 9.6 L14.6 11.2" stroke="#f0f2f3" stroke-width="0.9"/></svg></div></div>
 <div class="lab">Werkzeug</div>
 <div class="tit">Abwärmerechner<br>starten</div>
</div>

<div class="card r2" style="left:124px;top:472.6px">
 <div class="img" id="i5" style="background:#fbfbfb"><svg width="181" height="120" viewBox="0 0 181 120">
<defs><clipPath id="c5"><path d="M30.2 11.9 L34.5 10 L39.2 8.4 L43 10.4 L45.4 18.1 L48.5 17.4 L51.6 15.4 L53.9 20.1 L60.1 22.8 L61.7 25.9 L60.1 30.6 L60.9 36.8 L63.2 40.7 L67.9 43.8 L72.5 50 L76.4 53.9 L74.1 57.7 L70.2 61 L66.3 67.2 L63.2 73.4 L57.8 74.2 L52.3 77.3 L51.6 81.9 L48.5 86.6 L51.6 88.9 L49.2 98.2 L47.7 107.5 L46.9 113 L52.3 112.2 L55.5 116.1 L58.6 120.5 L0 120.5 L0 115.3 L13.5 115.3 L15.9 109.9 L13.5 102.9 L14.3 95.9 L15.9 88.9 L13.5 74.9 L8.9 61.7 L8.9 58.5 L13.5 53.9 L21.3 50.7 L25.2 44.5 L23.6 35.2 L29.1 35.2 L33.7 36 L32.2 25.9 L30.6 18.1 Z"/></clipPath>
<linearGradient id="g5ch" x1="0" y1="0" x2="0" y2="1"><stop offset="0" stop-color="#5a5a5a"/><stop offset="1" stop-color="#151515"/></linearGradient></defs>
<rect width="181" height="120" fill="#fbfbfb"/>
<path d="M20 0 L90 0 L90 120 L10 120 C14 100 8 80 12 60 C16 40 26 30 22 15 Z" fill="#eef1d8"/>
<g fill="#dde9c0" opacity="0.8">
<path d="M48 4 C56 2 64 8 62 16 C58 20 50 18 46 12 Z"/><path d="M62 28 C70 26 80 34 78 44 C74 48 66 42 62 36 Z"/>
<path d="M55 80 C62 78 70 86 72 96 C70 104 60 100 56 92 Z"/><path d="M66 104 C72 102 80 108 80 116 L66 120 Z"/>
</g>
<g fill="#8fb8e8"><path d="M66.5 85 L68.5 85 L69.5 93 L67 94 Z"/><path d="M76 93 L78 92 L78.5 100 L76 101 Z"/><ellipse cx="73" cy="113" rx="1.2" ry="1"/></g>
<g fill="none" stroke="#d8d8d8" stroke-width="0.4"><path d="M3 10 C8 20 4 40 10 55 C14 70 4 90 8 110"/><path d="M0 70 C6 72 10 68 14 75"/></g>
<path d="M20.5 1.1 C22 6 26 10 29.8 11.9" fill="none" stroke="#b080e0" stroke-width="0.7"/>
<path d="M30.2 11.9 L34.5 10 L39.2 8.4 L43 10.4 L45.4 18.1 L48.5 17.4 L51.6 15.4 L53.9 20.1 L60.1 22.8 L61.7 25.9 L60.1 30.6 L60.9 36.8 L63.2 40.7 L67.9 43.8 L72.5 50 L76.4 53.9 L74.1 57.7 L70.2 61 L66.3 67.2 L63.2 73.4 L57.8 74.2 L52.3 77.3 L51.6 81.9 L48.5 86.6 L51.6 88.9 L49.2 98.2 L47.7 107.5 L46.9 113 L52.3 112.2 L55.5 116.1 L58.6 120.5 L0 120.5 L0 115.3 L13.5 115.3 L15.9 109.9 L13.5 102.9 L14.3 95.9 L15.9 88.9 L13.5 74.9 L8.9 61.7 L8.9 58.5 L13.5 53.9 L21.3 50.7 L25.2 44.5 L23.6 35.2 L29.1 35.2 L33.7 36 L32.2 25.9 L30.6 18.1 Z" fill="#f8dcd4"/>
<g clip-path="url(#c5)" fill="#ecdcb8" opacity="0.7">
<path d="M30 40 C38 36 44 44 42 56 C38 62 30 56 30 48 Z"/><path d="M18 70 C26 66 34 74 32 86 C28 92 20 86 18 80 Z"/>
<path d="M36 95 C42 92 46 100 44 110 C40 114 34 108 34 102 Z"/><path d="M40 20 C46 18 50 26 48 32 C44 34 40 28 40 24 Z"/>
</g>
<g fill="none" stroke="#f0b070" stroke-width="0.5" opacity="0.8"><path d="M46.2 87.7 Q36.5 100.7 37.1 112.6"/><path d="M65.3 108.0 Q74.7 118.1 77.1 118.2"/><path d="M36.4 82.2 Q45.4 95.0 56.4 100.8"/><path d="M74.8 68.7 Q78.9 67.1 81.0 62.9"/><path d="M16.0 76.7 Q31.1 84.9 40.7 95.7"/><path d="M65.1 69.7 Q58.6 81.2 62.2 86.6"/><path d="M12.2 72.2 Q14.1 65.4 11.3 58.7"/><path d="M56.1 110.5 Q47.6 100.4 43.9 86.0"/><path d="M25.2 20.4 Q34.6 29.1 45.5 28.4"/><path d="M34.5 79.9 Q30.7 83.2 19.4 76.5"/><path d="M76.0 46.1 Q73.7 41.5 80.2 37.0"/><path d="M72.8 101.8 Q75.4 109.1 83.3 124.3"/><path d="M43.8 33.0 Q38.2 30.8 29.5 28.7"/><path d="M33.7 100.7 Q40.6 93.9 57.8 98.3"/><path d="M75.5 5.0 Q78.4 10.2 85.9 8.5"/><path d="M11.4 16.3 Q14.3 1.3 9.2 -7.5"/></g>
<rect x="37.3" y="66.9" width="10.5" height="1.1" fill="#606060" opacity="0.39"/><rect x="41.6" y="70.1" width="5.3" height="1.1" fill="#606060" opacity="0.40"/><rect x="51.1" y="94.0" width="4.7" height="1.1" fill="#606060" opacity="0.34"/><rect x="9.1" y="95.9" width="8.9" height="1.1" fill="#606060" opacity="0.26"/><rect x="78.6" y="113.9" width="8.6" height="1.1" fill="#606060" opacity="0.43"/><rect x="14.3" y="3.7" width="7.7" height="1.1" fill="#606060" opacity="0.27"/><rect x="16.8" y="30.1" width="4.2" height="1.1" fill="#606060" opacity="0.39"/><rect x="36.4" y="99.7" width="7.6" height="1.1" fill="#606060" opacity="0.44"/><rect x="41.0" y="78.8" width="7.2" height="1.1" fill="#606060" opacity="0.33"/><rect x="79.8" y="117.5" width="9.9" height="1.1" fill="#606060" opacity="0.46"/><rect x="26.6" y="28.6" width="6.0" height="1.1" fill="#606060" opacity="0.27"/><rect x="61.8" y="48.4" width="9.9" height="1.1" fill="#606060" opacity="0.37"/><rect x="76.7" y="100.3" width="4.0" height="1.1" fill="#606060" opacity="0.31"/><rect x="73.0" y="56.5" width="10.9" height="1.1" fill="#606060" opacity="0.37"/><rect x="7.7" y="75.0" width="9.4" height="1.1" fill="#606060" opacity="0.33"/><rect x="8.8" y="40.6" width="10.7" height="1.1" fill="#606060" opacity="0.48"/><rect x="11.2" y="30.6" width="4.7" height="1.1" fill="#606060" opacity="0.27"/><rect x="64.2" y="22.6" width="7.9" height="1.1" fill="#606060" opacity="0.38"/><rect x="16.9" y="86.9" width="4.9" height="1.1" fill="#606060" opacity="0.44"/><rect x="11.1" y="50.8" width="5.5" height="1.1" fill="#606060" opacity="0.33"/><rect x="77.7" y="95.2" width="6.1" height="1.1" fill="#606060" opacity="0.52"/><rect x="18.4" y="47.7" width="10.0" height="1.1" fill="#606060" opacity="0.44"/><rect x="9.8" y="116.8" width="5.5" height="1.1" fill="#606060" opacity="0.33"/><rect x="62.3" y="40.2" width="6.1" height="1.1" fill="#606060" opacity="0.27"/><rect x="9.0" y="69.6" width="5.7" height="1.1" fill="#606060" opacity="0.43"/><rect x="31.0" y="54.6" width="10.7" height="1.1" fill="#606060" opacity="0.40"/><rect x="46.8" y="102.5" width="5.3" height="1.1" fill="#606060" opacity="0.30"/><rect x="72.9" y="96.9" width="5.7" height="1.1" fill="#606060" opacity="0.31"/><rect x="59.7" y="111.1" width="5.4" height="1.1" fill="#606060" opacity="0.54"/><rect x="70.8" y="72.0" width="7.0" height="1.1" fill="#606060" opacity="0.28"/><rect x="5.0" y="113.7" width="5.7" height="1.1" fill="#606060" opacity="0.46"/><rect x="22.0" y="97.6" width="8.2" height="1.1" fill="#606060" opacity="0.34"/><rect x="15.7" y="85.6" width="4.5" height="1.1" fill="#606060" opacity="0.32"/><rect x="45.6" y="100.9" width="8.3" height="1.1" fill="#606060" opacity="0.33"/><rect x="73.6" y="25.7" width="4.1" height="1.1" fill="#606060" opacity="0.33"/><rect x="36.8" y="9.0" width="5.2" height="1.1" fill="#606060" opacity="0.36"/><rect x="46.6" y="17.3" width="6.5" height="1.1" fill="#606060" opacity="0.52"/><rect x="78.5" y="78.2" width="8.8" height="1.1" fill="#606060" opacity="0.43"/><rect x="12.9" y="6.1" width="4.1" height="1.1" fill="#606060" opacity="0.52"/><rect x="56.7" y="113.7" width="4.1" height="1.1" fill="#606060" opacity="0.44"/>
<path d="M30.2 11.9 L34.5 10 L39.2 8.4 L43 10.4 L45.4 18.1 L48.5 17.4 L51.6 15.4 L53.9 20.1 L60.1 22.8 L61.7 25.9 L60.1 30.6 L60.9 36.8 L63.2 40.7 L67.9 43.8 L72.5 50 L76.4 53.9 L74.1 57.7 L70.2 61 L66.3 67.2 L63.2 73.4 L57.8 74.2 L52.3 77.3 L51.6 81.9 L48.5 86.6 L51.6 88.9 L49.2 98.2 L47.7 107.5 L46.9 113 L52.3 112.2 L55.5 116.1 L58.6 120.5 L0 120.5 L0 115.3 L13.5 115.3 L15.9 109.9 L13.5 102.9 L14.3 95.9 L15.9 88.9 L13.5 74.9 L8.9 61.7 L8.9 58.5 L13.5 53.9 L21.3 50.7 L25.2 44.5 L23.6 35.2 L29.1 35.2 L33.7 36 L32.2 25.9 L30.6 18.1 Z" fill="none" stroke="#e83a3a" stroke-width="1"/>
<rect x="68.7" y="2.6" width="12.4" height="7.8" fill="#c8a838" opacity="0.85"/><rect x="73" y="4" width="3.5" height="4.5" fill="#58a0d8" transform="rotate(20 75 6)"/><rect x="74" y="3" width="2.5" height="2" fill="#e04a4a"/>
<rect x="84.5" y="0" width="96.5" height="120" fill="#fdfdfd"/>
<rect x="84.2" y="0" width="0.5" height="120" fill="#e2e4e8"/>
<rect x="84.75" y="0" width="95.9" height="4.7" fill="#2c5a98"/>
<rect x="87.5" y="2" width="39" height="1.2" fill="#c8d4e8" opacity="0.8"/>
<rect x="88.9" y="9.3" width="64.1" height="4.6" fill="#fff" stroke="#c0cce0" stroke-width="0.4"/>
<rect x="104.6" y="9.3" width="0.6" height="4.6" fill="#6a88b8"/><rect x="119" y="9.3" width="0.6" height="4.6" fill="#6a88b8"/><rect x="136" y="9.3" width="0.6" height="4.6" fill="#6a88b8"/>
<rect x="153" y="9.3" width="23" height="4.6" fill="#2c5a98"/>
<g fill="#f2f2f2"><rect x="88.9" y="14.3" width="87.1" height="4.6"/><rect x="88.9" y="19.3" width="87.1" height="4.6"/><rect x="88.9" y="24.3" width="87.1" height="5"/></g>
<g fill="#555" opacity="0.55"><rect x="93" y="16.3" width="37" height="1"/><rect x="93" y="21.3" width="38" height="1"/><rect x="93" y="26.5" width="45" height="1"/></g>
<rect x="88.9" y="30.2" width="87.1" height="44.2" fill="url(#g5ch)"/>
<rect x="91" y="32.3" width="59" height="1.1" fill="#cfcfcf" opacity="0.7"/>
<rect x="94.9" y="37.2" width="3" height="30.5" fill="#f4f4f4"/><rect x="94.9" y="37.2" width="3" height="2.5" fill="#3aa8a8"/><rect x="94.9" y="53.5" width="3" height="14.200000000000003" fill="#3aa8a8"/><rect x="92.9" y="66" width="7" height="1.3" fill="#e8e8e8"/><rect x="92.80000000000001" y="69.8" width="7.2" height="3.8" fill="#f6f6f6" stroke="#aaa" stroke-width="0.3"/><rect x="103.7" y="37.2" width="3" height="30.5" fill="#f4f4f4"/><rect x="103.7" y="37.2" width="3" height="2.5" fill="#5aa848"/><rect x="101.7" y="66" width="7" height="1.3" fill="#e8e8e8"/><rect x="101.60000000000001" y="69.8" width="7.2" height="3.8" fill="#f6f6f6" stroke="#aaa" stroke-width="0.3"/><rect x="112.0" y="37.2" width="3" height="30.5" fill="#f4f4f4"/><rect x="112.0" y="37.2" width="3" height="2.5" fill="#d88848"/><rect x="110.0" y="66" width="7" height="1.3" fill="#e8e8e8"/><rect x="109.9" y="69.8" width="7.2" height="3.8" fill="#f6f6f6" stroke="#aaa" stroke-width="0.3"/><rect x="120.3" y="37.2" width="3" height="30.5" fill="#f4f4f4"/><rect x="120.3" y="37.2" width="3" height="2.5" fill="#d8981a"/><rect x="120.3" y="52.2" width="3" height="15.5" fill="#d8981a"/><rect x="118.3" y="66" width="7" height="1.3" fill="#e8e8e8"/><rect x="118.2" y="69.8" width="7.2" height="3.8" fill="#f6f6f6" stroke="#aaa" stroke-width="0.3"/><rect x="129.1" y="37.2" width="3" height="30.5" fill="#f4f4f4"/><rect x="129.1" y="37.2" width="3" height="2.5" fill="#e0a030"/><rect x="129.1" y="64" width="3" height="3.700000000000003" fill="#e0a030"/><rect x="127.1" y="66" width="7" height="1.3" fill="#e8e8e8"/><rect x="127.0" y="69.8" width="7.2" height="3.8" fill="#f6f6f6" stroke="#aaa" stroke-width="0.3"/><rect x="137.4" y="37.2" width="3" height="30.5" fill="#f4f4f4"/><rect x="137.4" y="37.2" width="3" height="2.5" fill="#4a88c8"/><rect x="135.4" y="66" width="7" height="1.3" fill="#e8e8e8"/><rect x="135.3" y="69.8" width="7.2" height="3.8" fill="#f6f6f6" stroke="#aaa" stroke-width="0.3"/>
<rect x="148" y="40" width="0.5" height="27" fill="#888"/>
<rect x="150" y="37.2" width="9" height="2.5" fill="#e86a18"/>
<rect x="152.7" y="58.9" width="3.3" height="8.8" fill="#e86a18"/>
<rect x="151" y="69.8" width="7.5" height="3.8" fill="#f0c8a8"/>
<rect x="93" y="76.6" width="52" height="1.4" fill="#555" opacity="0.7"/>
<rect x="93" y="81.80000000000001" width="27.8" height="1" fill="#909090" opacity="0.5"/><rect x="92.3" y="84.4" width="8.299999999999997" height="3" fill="#d8ece8"/><rect x="100.6" y="84.4" width="8.400000000000006" height="3" fill="#e0ecd8"/><rect x="109" y="84.4" width="8.700000000000003" height="3" fill="#ecd0b0"/><rect x="117.7" y="84.4" width="17.10000000000001" height="3" fill="#f8ecd0"/><rect x="134.8" y="84.4" width="8.699999999999989" height="3" fill="#d0e0f0"/><rect x="151" y="84.4" width="8.8" height="3" fill="#f8d8c8"/><rect x="93" y="88.9" width="25.9" height="1" fill="#909090" opacity="0.5"/><rect x="92.3" y="91.5" width="8.299999999999997" height="3" fill="#d8ece8"/><rect x="100.6" y="91.5" width="8.400000000000006" height="3" fill="#e0ecd8"/><rect x="109" y="91.5" width="8.700000000000003" height="3" fill="#ecd0b0"/><rect x="117.7" y="91.5" width="17.10000000000001" height="3" fill="#f8ecd0"/><rect x="134.8" y="91.5" width="8.699999999999989" height="3" fill="#d0e0f0"/><rect x="93" y="95.60000000000001" width="37.6" height="1" fill="#909090" opacity="0.5"/><rect x="92.3" y="98.2" width="8.299999999999997" height="3" fill="#d8ece8"/><rect x="100.6" y="98.2" width="8.400000000000006" height="3" fill="#e0ecd8"/><rect x="117.7" y="98.2" width="17.10000000000001" height="3" fill="#f8ecd0"/><rect x="93" y="102.2" width="33.9" height="1" fill="#909090" opacity="0.5"/><rect x="92.3" y="104.8" width="8.299999999999997" height="3" fill="#d8ece8"/><rect x="100.6" y="104.8" width="8.400000000000006" height="3" fill="#e0ecd8"/><rect x="109" y="104.8" width="8.700000000000003" height="3" fill="#ecd0b0"/><rect x="117.7" y="104.8" width="17.10000000000001" height="3" fill="#f8ecd0"/><rect x="134.8" y="104.8" width="8.699999999999989" height="3" fill="#d0e0f0"/><rect x="151" y="104.8" width="8.8" height="3" fill="#f8d8c8"/><rect x="93" y="108.9" width="37.6" height="1" fill="#909090" opacity="0.5"/><rect x="92.3" y="111.5" width="8.299999999999997" height="3" fill="#d8ece8"/><rect x="100.6" y="111.5" width="8.400000000000006" height="3" fill="#e0ecd8"/><rect x="117.7" y="111.5" width="17.10000000000001" height="3" fill="#f8ecd0"/>
<g fill="#eee" stroke="#ddd" stroke-width="0.3"><rect x="92" y="117.3" width="22" height="3"/><rect x="116" y="117.3" width="22" height="3"/></g>
<circle cx="176" cy="39" r="2.6" fill="#fff" stroke="#d0e0f0" stroke-width="0.5"/><circle cx="176" cy="39" r="1.2" fill="#68a8e0"/>
<circle cx="84.6" cy="78" r="2.8" fill="#2c5a98"/>
<circle cx="78.8" cy="114.9" r="2.6" fill="#2c5a98"/><circle cx="78.8" cy="120.5" r="2.2" fill="#2c5a98"/>
</svg><div class="cc"><svg width="25" height="25" viewBox="0 0 25 25"><circle cx="12.3" cy="12.4" r="6.1" fill="none" stroke="#f0f2f3" stroke-width="1.6"/><path d="M14.7 10.6 C14.2 9.8 13.4 9.5 12.6 9.5 C10.9 9.5 9.9 10.8 9.9 12.5 C9.9 14.2 10.9 15.4 12.6 15.4 C13.5 15.4 14.3 15 14.8 14.2" fill="none" stroke="#f0f2f3" stroke-width="1.5"/><path d="M14.6 9.6 L14.6 11.2" stroke="#f0f2f3" stroke-width="0.9"/></svg></div></div>
 <div class="lab">Werkzeug</div>
 <div class="tit">Mischpult starten</div>
</div>
<div class="card r2" style="left:368.9px;top:472.6px">
 <div class="img" id="i6" style="background:#f9c421"><svg width="181" height="120" viewBox="0 0 181 120">
<defs>
<linearGradient id="g6a" x1="0" y1="0" x2="1" y2="0"><stop offset="0" stop-color="#f2ac22"/><stop offset="0.3" stop-color="#f6b922"/><stop offset="0.45" stop-color="#fac625" stop-opacity="0"/></linearGradient><radialGradient id="g6b" cx="0.5" cy="1" r="0.5"><stop offset="0" stop-color="#f8e040"/><stop offset="1" stop-color="#f8e040" stop-opacity="0"/></radialGradient>
<g id="mk"><circle r="5" fill="#f6e6c0"/><circle r="4.1" fill="#dba33a"/><path d="M-3 0 L3 0 M-1.5 -2.6 L1.5 2.6 M1.5 -2.6 L-1.5 2.6" stroke="#f8eed8" stroke-width="1"/><circle r="1.1" fill="#f8eed8"/></g>
</defs>
<rect width="181" height="120" fill="#f8c224"/>
<rect width="181" height="120" fill="url(#g6a)" opacity="0.75"/><ellipse cx="130" cy="122" rx="22" ry="8" fill="url(#g6b)"/>
<path d="M0 50 C15 55 30 80 40 100 C45 110 50 116 52 120 L0 120 Z" fill="#eea021" opacity="0.4"/>
<g fill="none" stroke="#eea836" stroke-width="0.5" opacity="0.7">
<path d="M0 60 C30 55 60 50 90 52 C120 55 150 50 181 48"/>
<path d="M88 0 C86 30 90 60 85 120"/>
<path d="M30 120 C50 90 80 70 120 60 C150 52 170 40 181 35"/>
<path d="M60 20 C90 30 130 40 181 70"/>
</g>
<use href="#mk" x="16.1" y="2.8"/><use href="#mk" x="31.6" y="0.3"/><use href="#mk" x="48.7" y="2"/><use href="#mk" x="62.4" y="2.8"/><use href="#mk" x="73.6" y="3.7"/><use href="#mk" x="108.7" y="3.7"/><use href="#mk" x="115.6" y="2.8"/><use href="#mk" x="123.3" y="5.4"/><use href="#mk" x="131.9" y="2"/><use href="#mk" x="5.8" y="14"/><use href="#mk" x="17" y="11.4"/><use href="#mk" x="20.4" y="17.4"/><use href="#mk" x="27.3" y="20.9"/><use href="#mk" x="30.7" y="20"/><use href="#mk" x="17" y="26"/><use href="#mk" x="32.4" y="27.7"/><use href="#mk" x="72.7" y="14"/><use href="#mk" x="88.2" y="16.6"/><use href="#mk" x="96.7" y="8.8"/><use href="#mk" x="98.4" y="19.1"/><use href="#mk" x="111.3" y="13.1"/><use href="#mk" x="128.5" y="13.1"/><use href="#mk" x="84.7" y="28.6"/><use href="#mk" x="119.9" y="28.6"/><use href="#mk" x="141.3" y="32.9"/><use href="#mk" x="179.9" y="29.4"/><use href="#mk" x="4.1" y="38.9"/><use href="#mk" x="11" y="38"/><use href="#mk" x="23" y="38.9"/><use href="#mk" x="33.3" y="39.7"/><use href="#mk" x="40.1" y="35.4"/><use href="#mk" x="41" y="41.4"/><use href="#mk" x="40.1" y="48.3"/><use href="#mk" x="91.6" y="47.4"/><use href="#mk" x="101.9" y="46.6"/><use href="#mk" x="117.3" y="45.7"/><use href="#mk" x="113.9" y="54.3"/><use href="#mk" x="129.3" y="51.7"/><use href="#mk" x="133.6" y="49.2"/><use href="#mk" x="177.3" y="50.9"/><use href="#mk" x="44.4" y="57.7"/><use href="#mk" x="55.6" y="57.7"/><use href="#mk" x="99.3" y="59.4"/><use href="#mk" x="103.6" y="60.3"/><use href="#mk" x="2.4" y="63.7"/><use href="#mk" x="21.3" y="70.6"/><use href="#mk" x="38.4" y="68"/><use href="#mk" x="31.6" y="76.6"/><use href="#mk" x="29" y="82.6"/><use href="#mk" x="83.9" y="83.5"/><use href="#mk" x="98.4" y="80"/><use href="#mk" x="107" y="75.7"/><use href="#mk" x="147.3" y="65.4"/><use href="#mk" x="52.1" y="105.8"/><use href="#mk" x="64.1" y="111.8"/><use href="#mk" x="2.4" y="110.9"/><use href="#mk" x="140.5" y="100.6"/><use href="#mk" x="11" y="119.5"/><use href="#mk" x="45.3" y="119.5"/>
<circle cx="42.7" cy="8.8" r="4.8" fill="#d8bd78" stroke="#7a6a40" stroke-width="0.5"/><path d="M42.7 8.8 L42.7 4.000000000000001 A4.8 4.8 0 0 1 44.73 4.45 Z" fill="#8a5a10"/><circle cx="149.9" cy="17.4" r="5.5" fill="#d8bd78" stroke="#7a6a40" stroke-width="0.5"/><path d="M149.9 17.4 L149.9 11.899999999999999 A5.5 5.5 0 0 1 152.22 12.42 Z" fill="#8a5a10"/><circle cx="17" cy="45.7" r="5.1" fill="#d8bd78" stroke="#7a6a40" stroke-width="0.5"/><path d="M17 45.7 L17 40.6 A5.1 5.1 0 0 1 19.16 41.08 Z" fill="#8a5a10"/><circle cx="74.5" cy="54.1" r="8.8" fill="#d8bd78" stroke="#7a6a40" stroke-width="0.5"/><path d="M74.5 54.1 L74.5 45.3 A8.8 8.8 0 0 1 75.42 45.35 Z" fill="#8a5a10"/><circle cx="92.4" cy="79.2" r="6" fill="#d8bd78" stroke="#7a6a40" stroke-width="0.5"/><path d="M92.4 79.2 L92.4 73.2 A6 6 0 0 1 94.94 73.76 Z" fill="#8a5a10"/><circle cx="136.2" cy="74" r="4.8" fill="#d8bd78" stroke="#7a6a40" stroke-width="0.5"/><path d="M136.2 74 L136.2 69.2 A4.8 4.8 0 0 1 138.23 69.65 Z" fill="#8a5a10"/><circle cx="30.7" cy="91.2" r="4.3" fill="#d8bd78" stroke="#7a6a40" stroke-width="0.5"/><path d="M30.7 91.2 L30.7 86.9 A4.3 4.3 0 0 1 32.52 87.30 Z" fill="#8a5a10"/>
</svg><div class="cc"><svg width="25" height="25" viewBox="0 0 25 25"><circle cx="12.3" cy="12.4" r="6.1" fill="none" stroke="#f0f2f3" stroke-width="1.6"/><path d="M14.7 10.6 C14.2 9.8 13.4 9.5 12.6 9.5 C10.9 9.5 9.9 10.8 9.9 12.5 C9.9 14.2 10.9 15.4 12.6 15.4 C13.5 15.4 14.3 15 14.8 14.2" fill="none" stroke="#f0f2f3" stroke-width="1.5"/><path d="M14.6 9.6 L14.6 11.2" stroke="#f0f2f3" stroke-width="0.9"/></svg></div></div>
 <div class="lab">Karte</div>
 <div class="tit">Menüpunkt<br>Solarenergie</div>
</div>
<div class="card r2" style="left:613.8px;top:472.6px">
 <div class="img" id="i7" style="background:#b6d096"><svg width="181" height="120" viewBox="0 0 181 120">
<defs>
<linearGradient id="g7sky" x1="0" y1="0" x2="1" y2="0"><stop offset="0" stop-color="#f6eedf"/><stop offset="1" stop-color="#ecd6b0"/></linearGradient>
<linearGradient id="g7gr" x1="0" y1="0" x2="1" y2="0.3"><stop offset="0" stop-color="#b2cf97"/><stop offset="0.55" stop-color="#a3c08a"/><stop offset="1" stop-color="#6f8f60"/></linearGradient>
</defs>
<rect width="181" height="58.2" fill="#b7d197"/>
<rect y="58.2" width="181" height="4" fill="#fbfcf8"/>
<rect y="62.2" width="181" height="58" fill="url(#g7sky)"/>
<path d="M5.5 62.3 A18.8 18.8 0 0 0 42.5 62.3 Z" fill="#e0bf7e"/>
<path d="M0 94.6 L181 84.4 L181 120 L0 120 Z" fill="url(#g7gr)"/>
<!-- factory shadows -->
<g fill="#7fa266">
<rect x="61.7" y="20" width="28.5" height="7"/><rect x="97.9" y="17" width="20.5" height="10"/>
<rect x="89.3" y="8.4" width="2.6" height="18.6"/><rect x="94.8" y="6" width="3.2" height="21"/>
<path d="M21.3 39.6 L34.7 36 L48.2 39.6 L48.2 53.7 L21.3 53.7 Z"/>
<path d="M74 39.6 L82.5 36 L91.7 39.6 L100.3 36 L109.5 39.6 L109.5 53.7 L74 53.7 Z"/>
<path d="M134 39.6 L148.1 36 L161.6 39.6 L161.6 53.7 L134 53.7 Z"/>
</g>
<g fill="#fff">
<rect x="62.5" y="20.8" width="28.2" height="6.2"/><rect x="98.7" y="17.8" width="20.2" height="9.2"/>
<rect x="90.1" y="9.2" width="2.5" height="17.8"/><rect x="95.6" y="6.8" width="3.1" height="20.2"/>
<path d="M76.5 9.6 C76 7.5 78.5 6.5 80 7.2 C81 4.8 85.5 5 86 7.5 C88 7.5 88.6 9.6 87.5 10.4 L77 10.4 Z"/>
<path d="M89 6.8 C88.5 4.8 90.5 3.6 92 4.2 C93 2.2 96.8 2.5 97 4.5 C98.5 4.8 98.6 6.5 97.8 7.2 L89.5 7.2 Z"/>
<path d="M20.3 38.6 L33.7 35 L47.2 38.6 L47.2 52.7 L20.3 52.7 Z"/>
<path d="M73 38.6 L81.5 35 L90.7 38.6 L99.3 35 L108.5 38.6 L108.5 52.7 L73 52.7 Z"/>
<path d="M133 38.6 L147.1 35 L160.6 38.6 L160.6 52.7 L133 52.7 Z"/>
</g>
<g fill="none" stroke="#d8222c" stroke-width="1.2">
<path d="M62.5 25.1 L56.4 25.1 L56.4 49.6 L48.2 49.6"/>
<path d="M118.9 25.1 L125.7 25.1 L125.7 49.6 L133 49.6"/>
<path d="M90.7 27 L90.7 38.6"/>
</g>
<g fill="#fff"><rect x="55.5" y="32" width="1.8" height="0.6"/><rect x="124.8" y="32" width="1.8" height="0.6"/><rect x="89.8" y="32" width="1.8" height="0.6"/><rect x="51" y="49.2" width="0.6" height="0.8"/><rect x="129" y="49.2" width="0.6" height="0.8"/></g>
<g fill="#5f8a4f">
<rect x="23.5" y="47.5" width="20" height="1"/><rect x="23.5" y="49.2" width="20" height="0.8"/><rect x="23.5" y="50.6" width="20" height="0.6"/>
<path d="M26 46.5 L33 44.5 L38 45.5 L40 41.5 L41.5 42.3 L40 46.5 L28 47 Z" fill="#8d9a84"/>
<path d="M73.5 42 L108 42 M73.5 46 L108 46 M73.5 49.5 L108 49.5 M80 38 L80 52.7 M90.7 38 L90.7 52.7 M101 38 L101 52.7" stroke="#d0d8cc" stroke-width="0.35"/>
<circle cx="82" cy="42.5" r="2.4"/><path d="M82 38.5 L82 46.5 M78 42.5 L86 42.5 M79.2 39.7 L84.8 45.3 M84.8 39.7 L79.2 45.3" stroke="#5f8a4f" stroke-width="0.9"/><circle cx="82" cy="42.5" r="1" fill="#fff"/>
<path d="M78.8 47 L85.2 47 L84.2 51.8 L79.8 51.8 Z"/>
<circle cx="99.8" cy="42.5" r="2.4"/><path d="M99.8 38.5 L99.8 46.5 M95.8 42.5 L103.8 42.5 M97 39.7 L102.6 45.3 M102.6 39.7 L97 45.3" stroke="#5f8a4f" stroke-width="0.9"/><circle cx="99.8" cy="42.5" r="1" fill="#fff"/>
<path d="M96.6 47 L103 47 L102 51.8 L97.6 51.8 Z"/>
<rect x="139.5" y="44" width="15" height="3.5"/><rect x="139.5" y="41" width="1" height="10"/><rect x="153.5" y="44" width="1" height="7"/><rect x="139.5" y="47.5" width="15" height="1"/>
<rect x="141" y="44" width="3" height="1.5" fill="#a8b8a0"/>
<rect x="141.5" y="38.5" width="1.2" height="1.2"/><rect x="144.5" y="38.5" width="1.2" height="1.2"/><rect x="147.5" y="38.5" width="1.2" height="1.2"/><rect x="150.5" y="38.5" width="1.2" height="1.2"/><rect x="153.5" y="38.5" width="1.2" height="1.2"/>
</g>
<!-- houses -->
<path d="M0 94.6 L40 92 L60 112 L100 108 L120 100 L150 98 L181 89.7 L181 84.4 L140 86 L100 89 L60 92 Z" fill="#6e8a5c" opacity="0.75"/>
<path d="M85 96 L100 90 L103 109.3 L88 113 Z" fill="#6e8a5c"/>
<g>
<path d="M38.4 93.8 L45.8 98.2 L49 120.3 L38.4 108 Z" fill="#a4650a"/>
<path d="M45.8 98.2 L68.6 76.6 L89.1 91.7 L85 95.8 L85 113 L49 120.3 Z" fill="#c8820c"/>
<path d="M33.5 88 L53.5 69.7 L68.6 76.6 L45.8 98.2 Z" fill="#cf9131"/>
<path d="M35.6 87.6 L53.8 71 L66.6 77 L45.4 96.6 Z" fill="#c1c0bd"/>
<path d="M40 92 L59.5 73.5 M43.8 82.6 L54.5 89 M49 77.6 L60 83.6" stroke="#cf9131" stroke-width="0.8"/>
<circle cx="63.3" cy="90.1" r="2.2" fill="#1a1714"/><circle cx="71.5" cy="88.4" r="2.2" fill="#1a1714"/>
<path d="M62.1 96.6 C65 99.6 71 99.6 74.4 94.6" stroke="#f1e2c4" stroke-width="0.9" fill="none"/>
<rect x="59.7" y="104.8" width="5.7" height="12.2" fill="#d8a046"/><rect x="70.7" y="104.4" width="6.5" height="5.3" fill="#d8a046"/>
<path d="M94 87.6 L98.5 91.7 L103 109.3 L94 99.9 Z" fill="#a4650a"/>
<path d="M98.5 91.7 L119.4 71.7 L136.1 84.4 L133.3 86.5 L133.3 101.9 L103 109.3 Z" fill="#c8820c"/>
<path d="M89.5 81.5 L106.7 65.6 L119.4 71.7 L98.5 90.9 Z" fill="#d39a38"/>
<rect x="116.5" y="82.7" width="4.9" height="5.7" fill="#d8a046"/><rect x="110.8" y="95.4" width="5.3" height="10.2" fill="#d8a046"/><rect x="121.4" y="95" width="5.7" height="4.9" fill="#d8a046"/>
<path d="M141 81.1 L145.1 84.4 L149.2 100.3 L141 90.1 Z" fill="#a4650a"/>
<path d="M145.1 84.4 L163.1 67.2 L177.4 78.6 L174.9 81.1 L174.9 93.3 L149.2 100.3 Z" fill="#c8820c"/>
<path d="M137.3 75 L151.6 62.7 L163.1 67.2 L145.1 84.4 Z" fill="#d39a38"/>
<rect x="161" y="77" width="3.5" height="4.5" fill="#d8a046"/><rect x="155" y="87" width="4" height="8" fill="#d8a046"/><rect x="165" y="88" width="4.5" height="3.5" fill="#d8a046"/>
</g>
</svg><div class="cc"><svg width="25" height="25" viewBox="0 0 25 25"><circle cx="12.3" cy="12.4" r="6.1" fill="none" stroke="#f0f2f3" stroke-width="1.6"/><path d="M14.7 10.6 C14.2 9.8 13.4 9.5 12.6 9.5 C10.9 9.5 9.9 10.8 9.9 12.5 C9.9 14.2 10.9 15.4 12.6 15.4 C13.5 15.4 14.3 15 14.8 14.2" fill="none" stroke="#f0f2f3" stroke-width="1.5"/><path d="M14.6 9.6 L14.6 11.2" stroke="#f0f2f3" stroke-width="0.9"/></svg></div></div>
 <div class="lab">Werkzeug</div>
 <div class="tit">Abwärmebörse<br>starten</div>
</div>
<div class="card r2" style="left:858.7px;top:472.6px">
 <div class="img" id="i8" style="background:#2a5b96"><svg width="181" height="120" viewBox="0 0 181 120">
<rect x="25" y="46.3" width="72.5" height="26.5" rx="3.6" fill="#fff"/>
<path d="M30.8 54.5 L35.2 59.6 L30.8 64.7" fill="none" stroke="#2a5b96" stroke-width="1.6"/>
<text x="40.6" y="57.3" font-family="Liberation Sans" font-weight="bold" font-size="7.4" fill="#3f6ba0" letter-spacing="0.3">3D-ANALYSE</text>
<text x="40.6" y="66.8" font-family="Liberation Sans" font-weight="bold" font-size="7.4" fill="#3f6ba0" letter-spacing="0.3">STARTEN</text>
<path d="M103.5 43.1 L128.6 43.1 L130.8 63.4 L101.6 63.4 Z" fill="#9fb4d2"/>
<path d="M111.8 43 L111 64 M120.4 43 L121 64" stroke="#2a5b96" stroke-width="1.1"/>
<path d="M102 52.6 L131 52.6" stroke="#2a5b96" stroke-width="1.1"/>
<rect x="101.6" y="65.4" width="29.5" height="1.1" fill="#9fb4d2"/>
<rect x="113.5" y="68.3" width="7" height="2.4" fill="#9fb4d2"/>
<rect x="108.3" y="70.9" width="17" height="1" fill="#9fb4d2"/>
<path d="M137.6 57.5 L140.6 57.5 L141.2 82 L137 82 Z" fill="#fff"/>
<path d="M139.1 48.8 C136.8 44 136.6 38 139.1 34.8 C141.6 38 141.6 44 139.1 48.8 Z" fill="#fff"/>
<path d="M135.8 54.9 C131 56 126 58.5 123.2 61.6 C128 62.2 133.5 59.5 136.6 56.8 Z" fill="#fff"/>
<path d="M142.2 54.3 C147 55.2 151.5 58 153.6 61.6 C149 61.8 144.5 59.5 141.5 56.5 Z" fill="#fff"/>
<circle cx="139.1" cy="52.3" r="2.9" fill="#fff"/>
</svg><div class="cc"><svg width="25" height="25" viewBox="0 0 25 25"><circle cx="12.3" cy="12.4" r="6.1" fill="none" stroke="#f0f2f3" stroke-width="1.6"/><path d="M14.7 10.6 C14.2 9.8 13.4 9.5 12.6 9.5 C10.9 9.5 9.9 10.8 9.9 12.5 C9.9 14.2 10.9 15.4 12.6 15.4 C13.5 15.4 14.3 15 14.8 14.2" fill="none" stroke="#f0f2f3" stroke-width="1.5"/><path d="M14.6 9.6 L14.6 11.2" stroke="#f0f2f3" stroke-width="0.9"/></svg></div></div>
 <div class="lab">Werkzeug</div>
 <div class="tit">3D-Analyse starten</div>
</div>
</body></html>
